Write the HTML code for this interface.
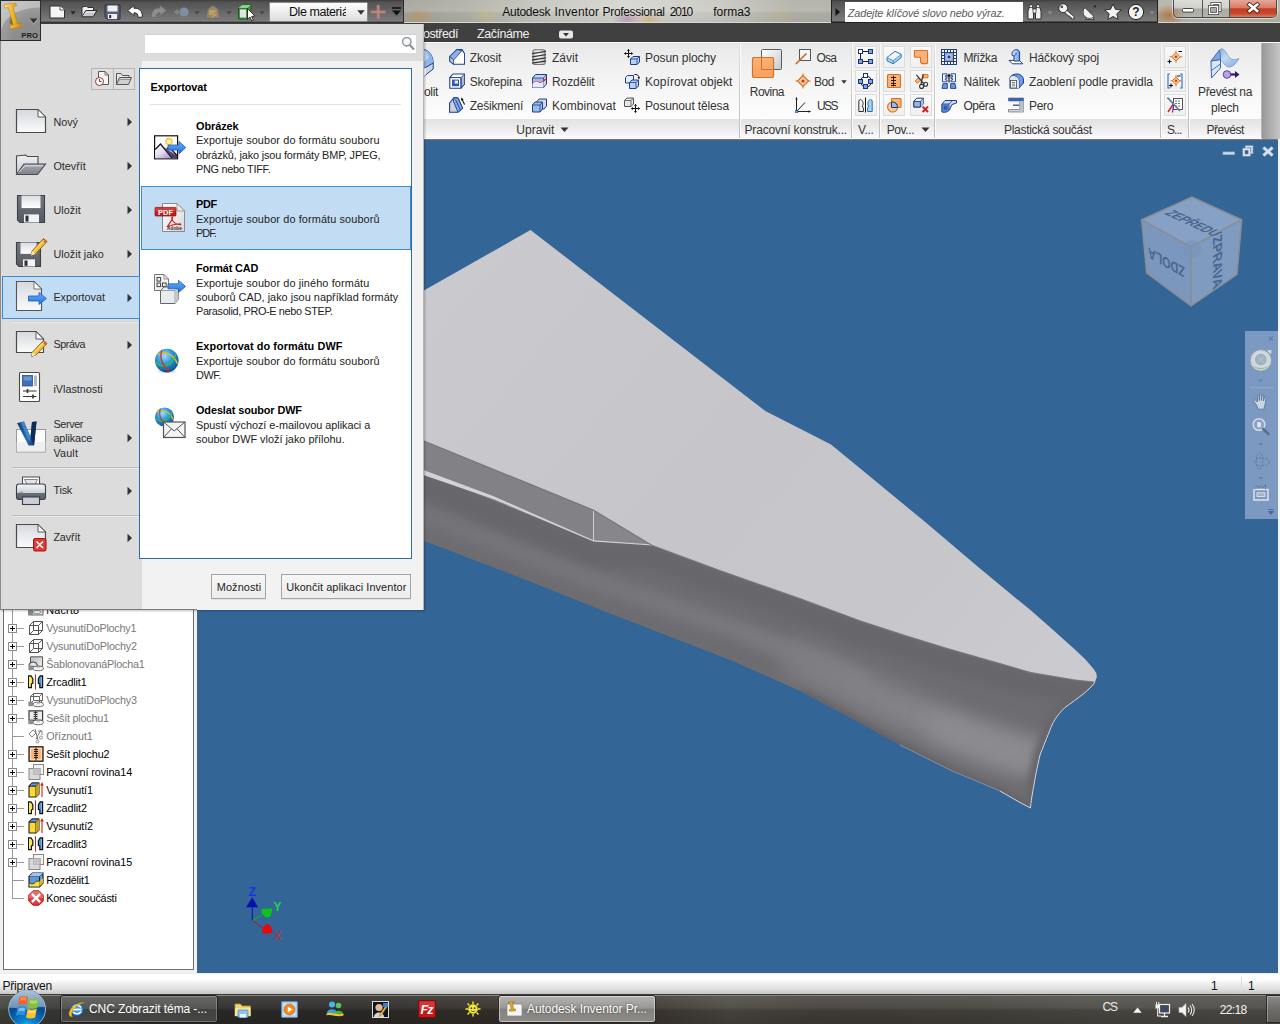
<!DOCTYPE html>
<html><head><meta charset="utf-8">
<style>
*{box-sizing:border-box;margin:0;padding:0}
html,body{width:1280px;height:1024px;overflow:hidden;background:#346597;font-family:"Liberation Sans",sans-serif;font-size:12px;color:#222}
.a{position:absolute}
.t{position:absolute;white-space:nowrap;line-height:1}
</style></head><body>
<div class="a" style="left:0px;top:0px;width:1280px;height:24px;background:linear-gradient(90deg,#8a867c 0,#a5a49b 32%,#adada4 36%,#c4c4bd 42%,#d6d6d0 49%,#c8c8c1 56%,#b0b0a7 62%,#a9a9a0 80%,#b0b0a6 90%,#babab0 94%,#b4b0a4 100%)"></div>
<div class="a" style="left:404px;top:0px;width:876px;height:24px;background:linear-gradient(rgba(255,255,255,.06),rgba(255,255,255,.12) 45%,rgba(0,0,0,.02) 55%,rgba(0,0,0,.05) 100%)"></div>
<div class="a" style="left:405px;top:8px;width:28px;height:16px;background:radial-gradient(closest-side,rgba(200,140,70,.55),rgba(200,140,70,0))"></div>
<div class="a" style="left:470px;top:6px;width:30px;height:18px;background:radial-gradient(closest-side,rgba(205,190,120,.45),rgba(205,190,120,0))"></div>
<div class="a" style="left:760px;top:6px;width:40px;height:18px;background:radial-gradient(closest-side,rgba(190,180,120,.4),rgba(190,180,120,0))"></div>
<div class="a" style="left:1152px;top:4px;width:34px;height:22px;background:radial-gradient(closest-side,rgba(176,104,50,.75),rgba(176,104,50,0))"></div>
<div class="a" style="left:612px;top:12px;width:30px;height:14px;background:radial-gradient(closest-side,rgba(170,110,170,.55),rgba(170,110,170,0))"></div>
<div class="a" style="left:634px;top:13px;width:30px;height:13px;background:radial-gradient(closest-side,rgba(220,160,90,.55),rgba(220,160,90,0))"></div>
<div class="a" style="left:404px;top:22.4px;width:876px;height:1px;background:#dad8d2"></div>
<div class="t" style="left:502.3px;top:6px;font-size:12.00px;color:#111;letter-spacing:-0.279px;">Autodesk</div>
<div class="t" style="left:554.6px;top:6px;font-size:12.00px;color:#111;letter-spacing:0.155px;">Inventor</div>
<div class="t" style="left:602.6px;top:6px;font-size:12.00px;color:#111;letter-spacing:-0.336px;">Professional</div>
<div class="t" style="left:669.8px;top:6px;font-size:12.00px;color:#111;letter-spacing:-1.124px;">2010</div>
<div class="t" style="left:713.2px;top:6px;font-size:12.00px;color:#111;letter-spacing:-0.008px;">forma3</div>
<div class="a" style="left:41px;top:0px;width:363px;height:24px;background:linear-gradient(#3c3c3c 0,#525252 8%,#646464 45%,#777777 80%,#797979 88%,#222 95%,#222 100%);border-right:1px solid #2a2a2a"></div>
<div class="a" style="left:831px;top:0px;width:327px;height:23px;background:linear-gradient(#3c3c3c 0,#525252 8%,#646464 45%,#777777 82%,#797979 90%,#222 97%,#222 100%);border-left:1px solid #222;border-right:1px solid #222"></div>
<div class="a" style="left:844.5px;top:2px;width:178.5px;height:19.5px;background:#fff"></div>
<div class="t" style="left:847.8px;top:8px;font-size:10.90px;color:#5c5c5c;letter-spacing:-0.126px;font-style:italic;">Zadejte klíčové slovo nebo výraz.</div>
<svg class="a" style="left:835px;top:7px" width="6" height="10" viewBox="0 0 6 10"><path d="M0.5,1 L5,5 L0.5,9Z" fill="#111"/></svg>
<div class="a" style="left:1173px;top:0px;width:104px;height:18px;border:1px solid #4a4a48;border-top:none;border-radius:0 0 5px 5px;background:linear-gradient(rgba(255,255,255,.5),rgba(255,255,255,.28) 48%,rgba(110,110,105,.28) 52%,rgba(190,190,185,.3));box-shadow:0 0 0 1px rgba(255,255,255,.5)"></div>
<div class="a" style="left:1230px;top:0px;width:46px;height:17px;border-radius:0 0 4px 0;background:linear-gradient(#e4a898 0,#d87c68 45%,#c23c22 52%,#c84a30 80%,#d87c5c 100%)"></div>
<div class="a" style="left:1202px;top:0px;width:1px;height:17px;background:#55524e"></div>
<div class="a" style="left:1229px;top:0px;width:1px;height:17px;background:#55524e"></div>
<svg class="a" style="left:1181px;top:6px" width="14" height="8" viewBox="0 0 14 8"><rect x="1.5" y="2.5" width="11" height="3.6" rx="1" fill="#fff" stroke="#444" stroke-width="1"/></svg>
<svg class="a" style="left:1208px;top:2px" width="14" height="13" viewBox="0 0 14 13"><rect x="4" y="1.5" width="8" height="7" fill="none" stroke="#444" stroke-width="3"/><rect x="4" y="1.5" width="8" height="7" fill="none" stroke="#fff" stroke-width="1.4"/><rect x="1.5" y="4.5" width="8" height="7" fill="#aaa" stroke="#444" stroke-width="3"/><rect x="1.5" y="4.5" width="8" height="7" fill="none" stroke="#fff" stroke-width="1.4"/></svg>
<svg class="a" style="left:1246px;top:2px" width="14" height="12" viewBox="0 0 14 12"><path d="M3.6,2.6 L11.2,9 M11.2,2.6 L3.6,9" stroke="#4a2a24" stroke-width="4.4" stroke-linecap="square"/><path d="M3.6,2.6 L11.2,9 M11.2,2.6 L3.6,9" stroke="#fff" stroke-width="2.6" stroke-linecap="square"/></svg>
<div class="a" style="left:0px;top:23.4px;width:1280px;height:18.2px;background:#404040"></div>
<div class="a" style="left:0px;top:41.6px;width:1280px;height:1.6px;background:#f8f8f8"></div>
<div class="t" style="left:423.0px;top:28px;font-size:12.50px;color:#f0f0f0;letter-spacing:-0.459px;">ostředí</div>
<div class="t" style="left:477.0px;top:28px;font-size:12.50px;color:#f0f0f0;letter-spacing:-0.447px;">Začínáme</div>
<svg class="a" style="left:558px;top:28.5px" width="16" height="11" viewBox="0 0 16 11"><rect x="1" y="1.5" width="14" height="8" rx="2" fill="#e8e8e8"/><path d="M5,4 L11,4 L8,7.5Z" fill="#333"/></svg>
<div class="a" style="left:0px;top:43px;width:1262px;height:77px;background:linear-gradient(#e8e8e8 0,#eeeeee 20%,#f6f6f6 60%,#fdfdfd 100%)"></div>
<div class="a" style="left:0px;top:119.4px;width:1262px;height:19.4px;background:linear-gradient(#e2e2e2,#e9e9e9 35%,#f4f4f4 75%,#fafafa 100%)"></div>
<div class="a" style="left:1262px;top:43px;width:18px;height:96.2px;background:linear-gradient(90deg,#989898,#c6c6c6)"></div>
<div class="a" style="left:0px;top:138.7px;width:1280px;height:2.1px;background:linear-gradient(#828a94,#4a6284 60%,#3a5f8c)"></div>
<div class="a" style="left:198px;top:141px;width:1080px;height:832px;background:#346597"></div>
<div class="a" style="left:1278px;top:139px;width:2px;height:835px;background:#f4f4f4"></div>
<svg class="a" style="left:0;top:0" width="1280" height="1024" viewBox="0 0 1280 1024">
<defs>
<linearGradient id="gdeck" gradientUnits="userSpaceOnUse" x1="480" y1="250" x2="1000" y2="700">
<stop offset="0" stop-color="#cacace"/><stop offset=".45" stop-color="#c5c5ca"/><stop offset=".8" stop-color="#c7c7cb"/><stop offset="1" stop-color="#cbcbcf"/>
</linearGradient>
<linearGradient id="ghl" gradientUnits="userSpaceOnUse" x1="423" y1="0" x2="1040" y2="0"><stop offset="0" stop-color="#747378"/><stop offset=".5" stop-color="#79787d"/><stop offset=".72" stop-color="#828186"/><stop offset="1" stop-color="#8b8a8f"/></linearGradient>
<clipPath id="chull"><path d="M380,455 L423,472 L593.5,541 L652.5,545 L720,570 L800,598 L860,620.2 L903.75,634.5 L947.5,648.1 L1000,663 L1031,672 L1075,679.4 L1092,681.3 L1095,682 C1090,690 1078,698 1065,707.5 C1056,716 1052,724 1050,730 C1045,742 1042,750 1040,755 C1037,768 1035,778 1034,785 C1032,795 1031,802 1030.5,808 L1030.5,808 L1020,802.5 L1000,791 L950,770 L900,745 L850,717.5 L800,691 L732,660.7 L607,612.3 L520,577.5 L423,540.5 L380,524 Z"/></clipPath>
<filter id="b6" filterUnits="userSpaceOnUse" x="300" y="350" width="900" height="550"><feGaussianBlur stdDeviation="6"/></filter>
<filter id="b10" filterUnits="userSpaceOnUse" x="300" y="350" width="900" height="550"><feGaussianBlur stdDeviation="10"/></filter>
<filter id="b3" filterUnits="userSpaceOnUse" x="300" y="350" width="900" height="550"><feGaussianBlur stdDeviation="3"/></filter>
</defs>
<g clip-path="url(#chull)">
<rect x="380" y="430" width="760" height="400" fill="#6d6c71"/>
<path d="M380,496 L423,513 L607,585 L732,628 L800,655 L860,684" fill="none" stroke="url(#ghl)" stroke-width="20" stroke-linecap="round" filter="url(#b6)"/>
<path d="M380,468 L423,485 L593.5,554 L652.5,558 L720,583 L800,611 L860,633.2 L903.75,647.5 L947.5,661.1 L1000,676 L1031,685 L1075,692.4 L1092,694.3" fill="none" stroke="#67666b" stroke-width="24" filter="url(#b6)"/>
<path d="M800,662 L850,685 L900,708 L960,734 L1010,752 L1042,760" fill="none" stroke="url(#ghl)" stroke-width="38" stroke-linecap="round" filter="url(#b10)"/>
<path d="M940,726 L985,744 L1022,756" fill="none" stroke="#8d8c91" stroke-width="24" stroke-linecap="round" filter="url(#b10)"/>
<path d="M800,691 L850,717.5 L900,745 L950,770 L1000,791 L1020,802.5 L1030.5,808" fill="none" stroke="#626166" stroke-width="6" filter="url(#b3)"/>
<path d="M1095,682 C1090,690 1078,698 1065,707.5 C1056,716 1052,724 1050,730 C1045,742 1042,750 1040,755 C1037,768 1035,778 1034,785 C1032,795 1031,802 1030.5,808" fill="none" stroke="#66666a" stroke-width="14" filter="url(#b3)"/>
</g>
<path d="M1095,682 C1090,690 1078,698 1065,707.5 C1056,716 1052,724 1050,730 C1045,742 1042,750 1040,755 C1037,768 1035,778 1034,785 C1032,795 1031,802 1030.5,808 L1020,802.5 L1000,791" fill="none" stroke="#d4d6da" stroke-width="1" stroke-linejoin="round"/><path d="M1000,791 L950,770 L900,745" fill="none" stroke="#a9b0bc" stroke-width=".8" opacity=".7"/>
<path d="M380,423 L423,440 L593.5,509.4 L593.5,541 L423,472 L380,455 Z" fill="#828186"/>
<path d="M593.5,509.4 L652.5,545 L593.5,541 Z" fill="#87868b"/>
<path d="M380,453 L423.4,470 L493.8,496.3 L593.5,540.2 L652.5,544.6 L652.5,545.4 L593.5,541.4 L493.8,499.2 L423.4,475 L380,459Z" fill="#d3d3d6"/>
<path d="M593.5,509.4 L593.5,541" fill="none" stroke="#cfcfd1" stroke-width="1"/>
<path d="M1092,681.3 L1075,679.4 L1031,672 L1000,663 L947.5,648.1 L903.75,634.5 L860,620.2 L800,598 L720,570 L652.5,545 L593.5,509.4 L423,440 L380,423" fill="none" stroke="#77767b" stroke-width="2.4"/>
<path d="M380,315.5 L423,291 L530.5,230 L765.3,411.1 L831,444.4 L872.7,478.8 L925.5,522.3 L978.2,567.1 L1031,610.6 L1050.3,627.4 L1073.8,648.5 L1085.5,659.6 L1093.6,669 Q1097.2,673 1096.7,677.4 L1095,682 L1092,681.3 L1075,679.4 L1031,672 L1000,663 L947.5,648.1 L903.75,634.5 L860,620.2 L800,598 L720,570 L652.5,545 L593.5,509.4 L423,440 L380,423 Z" fill="url(#gdeck)"/>
</svg>
<svg class="a" style="left:0;top:0" width="1280" height="1024" viewBox="0 0 1280 1024"><polygon points="1191.8,197.0 1241.7,219.7 1191.0,247.0 1141.6,219.7" fill="#87a1c5"/><polygon points="1141.6,219.7 1191.0,247.0 1191.0,305.8 1146.7,273.0" fill="#7c97bd"/><polygon points="1191.0,247.0 1241.7,219.7 1237.0,274.4 1191.0,305.8" fill="#809bc0"/><path d="M1191.8,197.0 L1241.7,219.7 L1237.0,274.4 L1191.0,305.8 L1146.7,273.0 L1141.6,219.7 Z M1141.6,219.7 L1191.0,247.0 M1241.7,219.7 L1191.0,247.0 M1191.0,305.8 L1191.0,247.0" fill="none" stroke="#8a8d93" stroke-width="1.5"/><circle cx="1192" cy="249" r="9" fill="#7792b8" opacity=".6"/><g transform="matrix(0.9102,0.4141,-1.2301,0.5562,1193.60,223.00)"><text x="0" y="4" text-anchor="middle" font-family="Liberation Sans,sans-serif" font-weight="bold" font-size="11" fill="#4b668f" textLength="55" lengthAdjust="spacingAndGlyphs">ZEPŘEDU</text></g><g transform="matrix(0.0000,1.0000,-1.1886,0.6400,1217.40,261.70)"><text x="0" y="4" text-anchor="middle" font-family="Liberation Sans,sans-serif" font-weight="bold" font-size="11" fill="#4b668f" textLength="52" lengthAdjust="spacingAndGlyphs">ZPRAVA</text></g><g transform="matrix(-0.8752,-0.4837,0.0000,-1.3500,1166.30,262.75)"><text x="0" y="4" text-anchor="middle" font-family="Liberation Sans,sans-serif" font-weight="bold" font-size="11" fill="#4b668f" textLength="42" lengthAdjust="spacingAndGlyphs">ZDOLA</text></g></svg>
<svg class="a" style="left:1220px;top:143px" width="58" height="16" viewBox="0 0 58 16"><rect x="3" y="9" width="11.5" height="2.6" fill="#d4deea" stroke="#9ab0cc" stroke-width=".8"/><rect x="26.4" y="3.6" width="5.6" height="6" fill="none" stroke="#8fa6c4" stroke-width="2.6"/><rect x="26.4" y="3.6" width="5.6" height="6" fill="none" stroke="#d8e1ec" stroke-width="1.3"/><rect x="23.8" y="6.2" width="5.6" height="6" fill="#3f5f8c" stroke="#8fa6c4" stroke-width="2.6"/><rect x="23.8" y="6.2" width="5.6" height="6" fill="none" stroke="#e4ebf3" stroke-width="1.4"/><path d="M43.5,4.5 L52.5,12.5 M52.5,4.5 L43.5,12.5" stroke="#9ab0cc" stroke-width="3.6"/><path d="M43.5,4.5 L52.5,12.5 M52.5,4.5 L43.5,12.5" stroke="#dbe4ee" stroke-width="2.2"/></svg>
<div class="a" style="left:1245px;top:331px;width:33px;height:188px;background:#7c99c1"></div>
<svg class="a" style="left:1245px;top:331px" width="33" height="188" viewBox="0 0 33 188"><path d="M24,5.5 L28,9.5 M28,5.5 L24,9.5" stroke="#6280aa" stroke-width="1.2"/><circle cx="15.8" cy="29.4" r="10.8" fill="#cdd6dc" stroke="#8a98a6" stroke-width="1"/><path d="M8,35 A10.8,10.8 0 0 0 23.6,35 A12,8 0 0 1 8,35Z" fill="#8fc49c"/><circle cx="15.8" cy="28.5" r="6.6" fill="#9fb0bf" stroke="#d5dde4" stroke-width="1.3"/><path d="M13,25.7 L18.6,31.3 M18.6,25.7 L13,31.3" stroke="#c4ced8" stroke-width=".8"/><path d="M22,19.5 L26.5,19 L26,23.5Z" fill="#d5dde4"/><path d="M13.3,48.5 L18.3,48.5 L15.8,51.5Z" fill="#6884ad"/><path d="M5,56.7 L29,56.7" stroke="#90a9cc" stroke-width="1"/><path d="M11.5,74 C9,71 8.5,69.5 9.5,69 C10.5,68.6 11.5,69.8 12.5,71 L12.3,65.5 C12.3,64 14,64 14.1,65.5 L14.3,69.5 L14.5,64 C14.6,62.6 16.3,62.6 16.3,64 L16.3,69.5 L17,64.8 C17.2,63.5 18.8,63.7 18.7,65.1 L18.4,70 L19.6,66.6 C20,65.4 21.4,65.9 21.1,67.2 C20.5,70 20.6,72.5 19.6,75 L19,78.2 L13.2,78.2 Z" fill="#c9d5e5" stroke="#5f7898" stroke-width=".9"/><circle cx="14" cy="93.5" r="5.8" fill="#8aa3c6" stroke="#d0dae8" stroke-width="1.5"/><path d="M18.3,98 L23.5,103.2" stroke="#5c6f8a" stroke-width="2.6" stroke-linecap="round"/><path d="M11.8,90.5 L15,90.5 L16.5,92 L16.5,96.8 L11.8,96.8Z" fill="#dfe6ee" stroke="#6f87a8" stroke-width=".6"/><path d="M13.3,112 L18.3,112 L15.8,115Z" fill="#6884ad"/><ellipse cx="17" cy="131" rx="7.5" ry="4" fill="none" stroke="#5f7ca6" stroke-width="1" stroke-dasharray="2.2 1.3"/><ellipse cx="14.5" cy="130" rx="3.2" ry="8.5" fill="none" stroke="#5f7ca6" stroke-width="1" stroke-dasharray="2.2 1.3"/><path d="M13.3,146 L18.3,146 L15.8,149Z" fill="#6884ad"/><rect x="9" y="158.5" width="14" height="10.5" fill="none" stroke="#e4e9f0" stroke-width="1.4"/><rect x="12" y="161.8" width="8" height="3.6" fill="#a8b4c4" stroke="#e4e9f0" stroke-width=".8"/><path d="M9,158.5 L12.5,154.5 L14,157 L16,154.5 L18,157 L20.5,153.5 L20.5,158.5" fill="none" stroke="#5f7ca6" stroke-width=".9"/><path d="M23.5,178.5 L28.5,178.5 M23.5,180.5 L28.5,180.5 L26,183.5Z" stroke="#4f6a92" stroke-width="1" fill="#4f6a92"/></svg>
<svg class="a" style="left:230px;top:870px" width="70" height="80" viewBox="0 0 70 80"><path d="M22.3,50.8 L22.3,37" stroke="#0b12b8" stroke-width="1.1"/><path d="M16,37.3 L28,37.3 L22.3,27.3Z" fill="#0a0fb4"/><path d="M22.3,50.8 L34,43.6" stroke="#10b81a" stroke-width="1"/><path d="M31.6,39 L42.6,38.3 L40.4,46.8 L35.5,47.6 L31.6,42.5Z" fill="#0cc41c"/><path d="M22.3,50.8 L33,58" stroke="#b01820" stroke-width="1"/><path d="M32,62.5 C32,58 35,54 37.5,54 C40,54 42,58 42,62.5 C40,63.8 34,63.8 32,62.5Z" fill="#e80808"/><text x="18.5" y="26" font-family="Liberation Sans,sans-serif" font-weight="bold" font-size="12.5" fill="#1a36e0">Z</text><text x="43.5" y="41" font-family="Liberation Sans,sans-serif" font-weight="bold" font-size="12" fill="#22d446">Y</text><text x="43.5" y="70" font-family="Liberation Sans,sans-serif" font-size="12.5" fill="#c22c3a">X</text></svg>
<div class="a" style="left:0px;top:140px;width:198px;height:836px;background:#f1f1f1"></div>
<div class="a" style="left:197px;top:140px;width:1.4px;height:834px;background:#4a6284"></div>
<div class="a" style="left:3px;top:140px;width:191px;height:830px;background:#fff;border:1px solid #6e6e6e;border-top:none"></div>
<div class="a" style="left:0px;top:973px;width:1280px;height:21px;background:linear-gradient(#e4e6ea 0,#ffffff 8%,#ffffff 30%,#f0f0f0 50%,#dcdcdc 80%,#c6c6c6 100%)"></div>
<div class="t" style="left:2.4px;top:980px;font-size:12.00px;color:#111;letter-spacing:-0.206px;">Připraven</div>
<div class="t" style="left:1211.0px;top:980px;font-size:12.00px;color:#111;">1</div>
<div class="t" style="left:1248.0px;top:980px;font-size:12.00px;color:#111;">1</div>
<div class="a" style="left:1241px;top:977px;width:1px;height:16px;background:#dedede"></div>
<svg class="a" style="left:423px;top:48px" width="12" height="30" viewBox="0 0 12 30"><path d="M0,1.2 C6,2 10.2,8 10.2,15 L10.2,21 L0,29Z" fill="#d0d6e0" stroke="#1a3e96" stroke-width="1"/><path d="M0,1.2 C6,2 10.2,8 10.2,15 L0,21Z" fill="#8fb4ea"/><path d="M0,2.5 C3,3 5,6 6,10 L0,14Z" fill="#c4d8f6" opacity=".8"/><path d="M0,21 L10.2,15" stroke="#1a3e96" stroke-width="1"/><path d="M0,21 L0,29 L3,26.6 L3,19.4Z" fill="#fff"/></svg>
<div class="t" style="left:424.0px;top:86px;font-size:12.00px;color:#333;letter-spacing:-0.335px;">olit</div>
<svg class="a" style="left:449px;top:49px" width="16" height="16" viewBox="0 0 16 16"><path d="M0.7,7.6 L8,0.5 L13,0.6 L15.6,4.7 L15.6,15.3 L4.6,15.3 L0.7,12Z" fill="#fff" stroke="#1a3e96" stroke-width="1.1" stroke-linejoin="round"/><path d="M0.7,7.6 L8,0.5 L12.9,1.8 L4.6,11Z" fill="#8eaee4" stroke="#1a3e96" stroke-width=".8"/><path d="M0.7,7.6 L4.6,11 L4.6,15.3 L0.7,12Z" fill="#c2c7d0" stroke="#1a3e96" stroke-width=".8"/></svg>
<div class="t" style="left:469.7px;top:52px;font-size:12.00px;color:#333;letter-spacing:-0.051px;">Zkosit</div>
<svg class="a" style="left:449px;top:73px" width="16" height="16" viewBox="0 0 16 16"><path d="M0.8,4.6 L4,1 L15.6,1 L15.6,11 L12,15.2 L0.8,15.2Z" fill="#fff" stroke="#1a3e96" stroke-width="1.1" stroke-linejoin="round"/><path d="M12,4.6 L15.6,1 L15.6,11 L12,15.2Z" fill="#b4bac4" stroke="#1a3e96" stroke-width=".8"/><path d="M0.8,4.6 L12,4.6 L12,15.2" fill="none" stroke="#1a3e96" stroke-width="1"/><rect x="3" y="6.6" width="7" height="6.6" fill="#2f57ac"/><rect x="5.6" y="7.6" width="3.4" height="3" fill="#e6ecf8"/></svg>
<div class="t" style="left:469.7px;top:76px;font-size:12.00px;color:#333;letter-spacing:-0.193px;">Skořepina</div>
<svg class="a" style="left:449px;top:97px" width="16" height="16" viewBox="0 0 16 16"><path d="M0.6,15.2 L0.6,6 L5,0.6 L9,1 L13.6,11.4 L9,15.2Z" fill="#cdd1d8" stroke="#1a3e96" stroke-width="1.1" stroke-linejoin="round"/><path d="M5,0.6 L9,1 L13.6,11.4 L9,15.2 L4.4,4.4Z" fill="#86a8e2" stroke="#1a3e96" stroke-width=".9"/><path d="M6.6,2.4 L11.4,13.2" stroke="#1a3e96" stroke-width=".8"/><path d="M15.6,7.6 L12.8,1.8" stroke="#111" stroke-width="1.1"/><path d="M12.2,0.6 L12,3.6 L14.6,2.4Z" fill="#111"/></svg>
<div class="t" style="left:469.7px;top:100px;font-size:12.00px;color:#333;letter-spacing:-0.228px;">Zešikmení</div>
<svg class="a" style="left:531px;top:49px" width="16" height="16" viewBox="0 0 16 16"><defs><linearGradient id="gth" x1="0" y1="0" x2="1" y2="0"><stop offset="0" stop-color="#d0d0d0"/><stop offset=".5" stop-color="#fafafa"/><stop offset="1" stop-color="#c4c4c4"/></linearGradient></defs><rect x="2" y="0.8" width="12" height="14.6" rx="1" fill="url(#gth)" stroke="#5a5a5a" stroke-width=".9"/><path d="M1,4.6 L15,2.4 M1,7.8 L15,5.6 M1,11 L15,8.8 M1,14.2 L15,12" stroke="#3a3a3a" stroke-width="1.3"/></svg>
<div class="t" style="left:552.0px;top:52px;font-size:12.00px;color:#333;letter-spacing:-0.001px;">Závit</div>
<svg class="a" style="left:531px;top:73px" width="16" height="16" viewBox="0 0 16 16"><path d="M1.5,5 L4.5,1.5 L15.5,1.5 L15.5,11 L12.5,14.5 L1.5,14.5Z" fill="#cfd5de" stroke="#1a3e96" stroke-width="1"/><path d="M1.5,5 L12.5,5 L12.5,14.5 L1.5,14.5Z" fill="#9dbbe6" stroke="#1a3e96" stroke-width=".8"/><path d="M12.5,5 L15.5,1.5" stroke="#1a3e96" stroke-width=".8"/><path d="M1.5,11 C4,8 6,8 8,9.5 C10,11 11,9 12.5,8 L15.5,5.5" fill="none" stroke="#d81e1e" stroke-width="1.2"/><path d="M1.5,11 C4,8 6,8 8,9.5 C10,11 11,9 12.5,8 L12.5,14.5 L1.5,14.5Z" fill="#e7ebf2"/></svg>
<div class="t" style="left:552.0px;top:76px;font-size:12.00px;color:#333;letter-spacing:-0.094px;">Rozdělit</div>
<svg class="a" style="left:531px;top:97px" width="16" height="16" viewBox="0 0 16 16"><path d="M5.5,5 L8,2 L15.5,2 L15.5,9 L13,12 L5.5,12Z" fill="#d5dbe5" stroke="#1a3e96" stroke-width="1"/><path d="M1.5,8 L4,5 L11.5,5 L11.5,12 L9,15 L1.5,15Z" fill="#9dbbe6" stroke="#1a3e96" stroke-width="1"/><path d="M1.5,8 L9,8 L9,15 M9,8 L11.5,5" fill="none" stroke="#1a3e96" stroke-width=".8"/></svg>
<div class="t" style="left:552.0px;top:100px;font-size:12.00px;color:#333;letter-spacing:0.063px;">Kombinovat</div>
<svg class="a" style="left:624px;top:49px" width="16" height="16" viewBox="0 0 16 16"><path d="M6.5,10 L9,7.5 L15.5,7.5 L15.5,13 L13,15.5 L6.5,15.5Z" fill="#b9d0ee" stroke="#1a3e96" stroke-width="1"/><path d="M6.5,10 L13,10 L13,15.5 M13,10 L15.5,7.5" fill="none" stroke="#1a3e96" stroke-width=".8"/><path d="M4.5,0.5 L4.5,8.5 M0.5,4.5 L8.5,4.5" stroke="#111" stroke-width="1"/><path d="M4.5,0 L3,2 L6,2Z M4.5,9 L3,7 L6,7Z M0,4.5 L2,3 L2,6Z M9,4.5 L7,3 L7,6Z" fill="#111"/></svg>
<div class="t" style="left:645.0px;top:52px;font-size:12.00px;color:#333;letter-spacing:-0.087px;">Posun plochy</div>
<svg class="a" style="left:624px;top:73px" width="16" height="16" viewBox="0 0 16 16"><path d="M1.5,4.5 L3.5,2.5 L9.5,2.5 L9.5,8 L7.5,10 L1.5,10Z" fill="#e9edf3" stroke="#1a3e96" stroke-width="1"/><path d="M5.5,9.5 L8,7 L14.5,7 L14.5,13 L12,15.5 L5.5,15.5Z" fill="#b9d0ee" stroke="#1a3e96" stroke-width="1"/><path d="M5.5,9.5 L12,9.5 L12,15.5 M12,9.5 L14.5,7" fill="none" stroke="#1a3e96" stroke-width=".8"/><path d="M10.5,1.5 C13,1 15,2.5 15,5" fill="none" stroke="#111" stroke-width="1"/><path d="M15,6.5 L13.5,4.3 L16,4.3Z" fill="#111"/></svg>
<div class="t" style="left:645.0px;top:76px;font-size:12.00px;color:#333;letter-spacing:0.049px;">Kopírovat objekt</div>
<svg class="a" style="left:624px;top:97px" width="16" height="16" viewBox="0 0 16 16"><path d="M0.5,3.5 L3,1 L9.5,1 L9.5,7 L7,9.5 L0.5,9.5Z" fill="#e3e6ea" stroke="#555" stroke-width="1"/><path d="M0.5,3.5 L7,3.5 L7,9.5 M7,3.5 L9.5,1" fill="none" stroke="#555" stroke-width=".8"/><path d="M11.5,7.5 L11.5,15.5 M7.5,11.5 L15.5,11.5" stroke="#111" stroke-width="1"/><path d="M11.5,7 L10,9 L13,9Z M11.5,16 L10,14 L13,14Z M7,11.5 L9,10 L9,13Z M16,11.5 L14,10 L14,13Z" fill="#111"/></svg>
<div class="t" style="left:645.0px;top:100px;font-size:12.00px;color:#333;letter-spacing:-0.138px;">Posunout tělesa</div>
<div class="t" style="left:516.3px;top:124px;font-size:12.00px;color:#333;letter-spacing:-0.001px;">Upravit</div>
<svg class="a" style="left:560px;top:127px" width="9" height="6" viewBox="0 0 9 6"><path d="M0.5,0.5 L8.5,0.5 L4.5,5Z" fill="#333"/></svg>
<div class="a" style="left:738.5px;top:44px;width:1px;height:94px;background:linear-gradient(#e2e2e2,#c9c9c9 50%,#bdbdbd)"></div>
<div class="a" style="left:739.5px;top:44px;width:1px;height:94px;background:rgba(255,255,255,.8)"></div>
<div class="a" style="left:851px;top:44px;width:1px;height:94px;background:linear-gradient(#e2e2e2,#c9c9c9 50%,#bdbdbd)"></div>
<div class="a" style="left:852px;top:44px;width:1px;height:94px;background:rgba(255,255,255,.8)"></div>
<div class="a" style="left:879px;top:44px;width:1px;height:94px;background:linear-gradient(#e2e2e2,#c9c9c9 50%,#bdbdbd)"></div>
<div class="a" style="left:880px;top:44px;width:1px;height:94px;background:rgba(255,255,255,.8)"></div>
<div class="a" style="left:933.5px;top:44px;width:1px;height:94px;background:linear-gradient(#e2e2e2,#c9c9c9 50%,#bdbdbd)"></div>
<div class="a" style="left:934.5px;top:44px;width:1px;height:94px;background:rgba(255,255,255,.8)"></div>
<div class="a" style="left:1160px;top:44px;width:1px;height:94px;background:linear-gradient(#e2e2e2,#c9c9c9 50%,#bdbdbd)"></div>
<div class="a" style="left:1161px;top:44px;width:1px;height:94px;background:rgba(255,255,255,.8)"></div>
<div class="a" style="left:1188px;top:44px;width:1px;height:94px;background:linear-gradient(#e2e2e2,#c9c9c9 50%,#bdbdbd)"></div>
<div class="a" style="left:1189px;top:44px;width:1px;height:94px;background:rgba(255,255,255,.8)"></div>
<div class="a" style="left:1261px;top:43px;width:1px;height:95px;background:#b5b5b5"></div>
<svg class="a" style="left:750px;top:47px" width="34" height="33" viewBox="0 0 34 33"><defs><linearGradient id="gw" x1="0" y1="0" x2="1" y2="1"><stop offset="0" stop-color="#ffffff"/><stop offset="1" stop-color="#c5c9cf"/></linearGradient><linearGradient id="go" x1="0" y1="0" x2="0" y2="1"><stop offset="0" stop-color="#fbb278"/><stop offset="1" stop-color="#f7a060"/></linearGradient></defs><rect x="11.5" y="2.5" width="20" height="20" rx="1" fill="url(#gw)" stroke="#5c5c5c" stroke-width="1"/><rect x="2.5" y="10.5" width="21" height="20" rx="1.2" fill="url(#go)" stroke="#d9701e" stroke-width="1.2"/><path d="M11.5,10.5 L11.5,22.5 L23.5,22.5" fill="none" stroke="#d9701e" stroke-width="1"/></svg>
<div class="t" style="left:749.8px;top:86px;font-size:12.00px;color:#333;letter-spacing:-0.526px;">Rovina</div>
<svg class="a" style="left:795px;top:49px" width="16" height="16" viewBox="0 0 16 16"><rect x="4.5" y="0.5" width="11" height="11" fill="#f4f5f7" stroke="#555" stroke-width="1"/><path d="M0.8,15 L11.5,4.5" stroke="#c9641c" stroke-width="1.6"/></svg>
<div class="t" style="left:816.5px;top:52px;font-size:12.00px;color:#333;letter-spacing:-0.836px;">Osa</div>
<svg class="a" style="left:794.5px;top:72.6px" width="16" height="16" viewBox="0 0 16 16"><path d="M8,0.5 L8,15.5 M0.5,8 L15.5,8" stroke="#d9701e" stroke-width="1"/><path d="M8,2.5 L13.5,8 L8,13.5 L2.5,8Z" fill="#fbc9a0" stroke="#d9701e" stroke-width="1.1"/><circle cx="8" cy="8" r="1.6" fill="#b8480c"/></svg>
<div class="t" style="left:814.0px;top:76px;font-size:12.00px;color:#333;letter-spacing:-0.451px;">Bod</div>
<svg class="a" style="left:840.5px;top:79.5px" width="6" height="4" viewBox="0 0 6 4"><path d="M0.3,0.3 L5.7,0.3 L3,3.7Z" fill="#333"/></svg>
<svg class="a" style="left:794.5px;top:97px" width="16" height="16" viewBox="0 0 16 16"><path d="M1.5,0.5 L1.5,14.5 L15.5,14.5" fill="none" stroke="#222" stroke-width="1"/><path d="M1.5,14.5 L10,5.5" stroke="#222" stroke-width="1"/><path d="M1.5,0 L0.3,2.5 L2.7,2.5Z M16,14.5 L13.5,13.3 L13.5,15.7Z" fill="#222"/><rect x="0.5" y="13.5" width="2.4" height="2.4" fill="#5b9ae8" stroke="#1f4a9e" stroke-width=".5"/></svg>
<div class="t" style="left:817.0px;top:100px;font-size:12.00px;color:#333;letter-spacing:-1.558px;">USS</div>
<div class="t" style="left:744.5px;top:124px;font-size:12.00px;color:#333;letter-spacing:-0.177px;">Pracovní konstruk...</div>
<div class="a" style="left:855px;top:46px;width:22px;height:22px;background:linear-gradient(#fafafa,#efefef);border:1px solid #dcdcdc"></div>
<svg class="a" style="left:858px;top:49px" width="16" height="16" viewBox="0 0 16 16"><path d="M5,2.5 H11 M2.5,5 V11 M5,12.5 H11" fill="none" stroke="#1a1a1a" stroke-width="1"/><rect x="0.5" y="0.5" width="4" height="4" fill="#fff" stroke="#16367e" stroke-width="1"/><rect x="10.5" y="0.5" width="4" height="4" fill="#7ea2e6" stroke="#16367e" stroke-width="1"/><rect x="0.5" y="10.5" width="4" height="4" fill="#7ea2e6" stroke="#16367e" stroke-width="1"/><rect x="10.5" y="10.5" width="4" height="4" fill="#7ea2e6" stroke="#16367e" stroke-width="1"/></svg>
<div class="a" style="left:855px;top:70px;width:22px;height:22px;background:linear-gradient(#fafafa,#efefef);border:1px solid #dcdcdc"></div>
<svg class="a" style="left:858px;top:73px" width="16" height="16" viewBox="0 0 16 16"><circle cx="8" cy="8.5" r="5.5" fill="none" stroke="#1a1a1a" stroke-width="1"/><rect x="5.5" y="0.5" width="4" height="4" fill="#fff" stroke="#16367e" stroke-width="1"/><rect x="0.5" y="6.5" width="4" height="4" fill="#7ea2e6" stroke="#16367e" stroke-width="1"/><rect x="10.5" y="6.5" width="4" height="4" fill="#7ea2e6" stroke="#16367e" stroke-width="1"/><rect x="5.5" y="11.5" width="4" height="4" fill="#7ea2e6" stroke="#16367e" stroke-width="1"/></svg>
<div class="a" style="left:855px;top:94px;width:22px;height:22px;background:linear-gradient(#fafafa,#efefef);border:1px solid #dcdcdc"></div>
<svg class="a" style="left:858px;top:97px" width="16" height="16" viewBox="0 0 16 16"><path d="M7.5,0.5 V15.5" stroke="#111" stroke-width="1"/><path d="M0.8,14.5 V3.6 L2.6,2.4 C5.2,3.6 5.8,7 4.4,9 L4.4,10 L5.4,10.6 V14.5Z" fill="#eef0f4" stroke="#333" stroke-width="1"/><path d="M14.2,14.5 V3.6 L12.4,2.4 C9.8,3.6 9.2,7 10.6,9 L10.6,10 L9.6,10.6 V14.5Z" fill="#a9d2f2" stroke="#2a6cb4" stroke-width="1"/></svg>
<div class="a" style="left:883px;top:46px;width:22px;height:22px;background:linear-gradient(#fafafa,#efefef);border:1px solid #dcdcdc"></div>
<svg class="a" style="left:886px;top:49px" width="16" height="16" viewBox="0 0 16 16"><path d="M1,8.6 L9,2.4 L15.2,5.4 L15.2,8.6 L7.2,14.8 L1,11.8Z" fill="#a4d4f4" stroke="#2a78bc" stroke-width="1" stroke-linejoin="round"/><path d="M1,8.6 L9,2.4 L15.2,5.4 L7.2,11.6Z" fill="#f4f4f4" stroke="#2a78bc" stroke-width=".7"/><path d="M7.2,11.6 V14.8" stroke="#2a78bc" stroke-width=".7"/></svg>
<div class="a" style="left:910px;top:46px;width:22px;height:22px;background:linear-gradient(#fafafa,#efefef);border:1px solid #dcdcdc"></div>
<svg class="a" style="left:913px;top:49px" width="16" height="16" viewBox="0 0 16 16"><path d="M2.2,1.5 H13.8 Q14.6,1.5 14.6,2.3 V13.8 Q14.6,14.6 13.8,14.6 H9 L7.6,13.2 V9 Q7.6,8.2 6.8,8.2 H2.2 Q1.4,8.2 1.4,7.4 V2.3 Q1.4,1.5 2.2,1.5Z" fill="#fbb27a" stroke="#d9701e" stroke-width="1.1"/></svg>
<div class="a" style="left:883px;top:70px;width:22px;height:22px;background:linear-gradient(#fafafa,#efefef);border:1px solid #dcdcdc"></div>
<svg class="a" style="left:886px;top:73px" width="16" height="16" viewBox="0 0 16 16"><rect x="1.5" y="1.5" width="13" height="13" rx="1" fill="#fbb27a" stroke="#d9701e" stroke-width="1.1"/><path d="M7.5,1.5 V14.5" stroke="#d9701e" stroke-width="1"/><path d="M7.5,3 V13 M5,4.5 H10 M5,7.5 H10 M5,10.5 H10 M5,12.5 H10" stroke="#2a1a10" stroke-width="1"/></svg>
<div class="a" style="left:910px;top:70px;width:22px;height:22px;background:linear-gradient(#fafafa,#efefef);border:1px solid #dcdcdc"></div>
<svg class="a" style="left:913px;top:73px" width="16" height="16" viewBox="0 0 16 16"><path d="M10,1.2 V6 M10,1.6 H15 V4.8 H10" fill="#fbb27a" stroke="#d9701e" stroke-width=".9"/><path d="M2,8 L5.2,4.8 L7.6,7.2 L4.4,10.4Z" fill="#fbb27a" stroke="#d9701e" stroke-width=".9"/><path d="M3.4,1.8 L11.4,11.4 M10.2,1.2 L8,11" stroke="#3a3a3a" stroke-width="1.3"/><circle cx="12.6" cy="11.2" r="2" fill="none" stroke="#333" stroke-width="1.1"/><circle cx="8.6" cy="13.4" r="2" fill="none" stroke="#333" stroke-width="1.1"/></svg>
<div class="a" style="left:883px;top:94px;width:22px;height:22px;background:linear-gradient(#fafafa,#efefef);border:1px solid #dcdcdc"></div>
<svg class="a" style="left:886px;top:97px" width="16" height="16" viewBox="0 0 16 16"><rect x="5.5" y="1.5" width="9.5" height="9" rx=".8" fill="#fbb27a" stroke="#d9701e" stroke-width="1.1"/><circle cx="6.6" cy="10" r="5" fill="#fbc9a0" stroke="#d9701e" stroke-width="1.1"/><path d="M5.5,5.1 A5,5 0 0 1 11.5,10.5 L5.5,10.5Z" fill="#9dbbe6" stroke="#16367e" stroke-width="1"/></svg>
<div class="a" style="left:910px;top:94px;width:22px;height:22px;background:linear-gradient(#fafafa,#efefef);border:1px solid #dcdcdc"></div>
<svg class="a" style="left:913px;top:97px" width="16" height="16" viewBox="0 0 16 16"><path d="M0.8,4.4 L3.8,1.2 L10.4,1.2 L10.4,6.8 L7.4,10 L0.8,10Z" fill="#fff" stroke="#16367e" stroke-width="1" stroke-linejoin="round"/><path d="M7.4,4.4 L10.4,1.2 L10.4,6.8 L7.4,10Z" fill="#b8bec8"/><path d="M0.8,4.4 H7.4 V10 H0.8Z" fill="#9db4dc" stroke="#16367e" stroke-width=".9"/><path d="M7.4,4.4 L10.4,1.2" stroke="#16367e" stroke-width=".8"/><path d="M9.6,9.6 L15,15 M15,9.6 L9.6,15" stroke="#d41a1a" stroke-width="2"/></svg>
<div class="t" style="left:858.0px;top:124px;font-size:12.00px;color:#333;letter-spacing:-0.326px;">V...</div>
<div class="t" style="left:886.7px;top:124px;font-size:12.00px;color:#333;letter-spacing:-0.382px;">Pov...</div>
<svg class="a" style="left:920.5px;top:127px" width="9" height="6" viewBox="0 0 9 6"><path d="M0.5,0.5 L8.5,0.5 L4.5,5Z" fill="#333"/></svg>
<svg class="a" style="left:941px;top:49px" width="16" height="16" viewBox="0 0 16 16"><rect x="0" y="0" width="16" height="16" fill="#24407c"/><g fill="#f6f8fb"><rect x="1" y="1" width="2" height="2"/><rect x="1" y="4" width="2" height="2"/><rect x="1" y="7" width="2" height="2"/><rect x="1" y="10" width="2" height="2"/><rect x="1" y="13" width="2" height="2"/><rect x="4" y="1" width="2" height="2"/><rect x="4" y="13" width="2" height="2"/><rect x="7" y="1" width="2" height="2"/><rect x="7" y="13" width="2" height="2"/><rect x="10" y="1" width="2" height="2"/><rect x="10" y="13" width="2" height="2"/><rect x="13" y="1" width="2" height="2"/><rect x="13" y="4" width="2" height="2"/><rect x="13" y="7" width="2" height="2"/><rect x="13" y="10" width="2" height="2"/><rect x="13" y="13" width="2" height="2"/></g><rect x="4" y="4" width="8" height="8" fill="#8ea6d4"/><rect x="5.5" y="5.5" width="5" height="5" fill="#c8d6ee"/><rect x="6.6" y="6.6" width="2.8" height="2.8" fill="#24407c"/></svg>
<div class="t" style="left:963.4px;top:52px;font-size:12.00px;color:#333;letter-spacing:-0.400px;">Mřížka</div>
<svg class="a" style="left:941px;top:73px" width="16" height="16" viewBox="0 0 16 16"><path d="M1.5,0.8 H6 V2.6 H4.4 V4 H6 V5.6 H4.4 V7 H6 V8.8 H1.5Z M14.5,0.8 H10 V2.6 H11.6 V4 H10 V5.6 H11.6 V7 H10 V8.8 H14.5Z" fill="#f2f5fa" stroke="#1a3e96" stroke-width=".9"/><path d="M1,15.4 L2,10.6 H6.4 V15.4Z M15,15.4 L14,10.6 H9.6 V15.4Z" fill="#6e98e0" stroke="#1a3e96" stroke-width=".9"/><path d="M8,9.6 V2.4" stroke="#111" stroke-width="1.2"/><path d="M8,0.4 L5.8,3.4 H10.2Z" fill="#111"/></svg>
<div class="t" style="left:963.4px;top:76px;font-size:12.00px;color:#333;letter-spacing:-0.040px;">Nálitek</div>
<svg class="a" style="left:941px;top:97px" width="16" height="16" viewBox="0 0 16 16"><path d="M1,7 L4,3.5 L15.5,3.5 L15.5,6 L11,7.5 L8.5,13 L5,15 L1,15Z" fill="#cfd9e8" stroke="#1a3e96" stroke-width="1"/><path d="M1,7 L8,7 L8,13.5 L5,15 L1,15Z" fill="#6d9ae0" stroke="#1a3e96" stroke-width=".8"/><path d="M8,7 L11,3.8" stroke="#1a3e96" stroke-width=".8"/><rect x="2.5" y="8.5" width="4" height="4.5" fill="#2d5aae"/></svg>
<div class="t" style="left:963.4px;top:100px;font-size:12.00px;color:#333;letter-spacing:-0.410px;">Opěra</div>
<svg class="a" style="left:1008px;top:49px" width="16" height="16" viewBox="0 0 16 16"><defs><linearGradient id="ghk" x1="0" y1="0" x2="1" y2="0"><stop offset="0" stop-color="#dfe9f8"/><stop offset="1" stop-color="#6e98e0"/></linearGradient></defs><path d="M1,11.4 H11.4 L14.8,14.8 H4.4Z" fill="#fff" stroke="#1a3e96" stroke-width="1"/><path d="M6,12 V7 L4.2,6.4 C3.4,3 5.4,0.8 8.4,0.6 C10.6,0.6 11.6,2 11.6,4 V12Z" fill="url(#ghk)" stroke="#1a3e96" stroke-width="1"/><path d="M6,7 C7.6,6.6 8.2,5.4 8,4" fill="none" stroke="#1a3e96" stroke-width=".8"/></svg>
<div class="t" style="left:1029.0px;top:52px;font-size:12.00px;color:#333;letter-spacing:-0.113px;">Háčkový spoj</div>
<svg class="a" style="left:1008px;top:73px" width="16" height="16" viewBox="0 0 16 16"><path d="M1.5,15 L1.5,7 C1.5,3 5,1 9,1 C13,1 15.5,4 15.5,7 L15.5,10 L11,15Z" fill="#6d9ae0" stroke="#1a3e96" stroke-width="1"/><path d="M4.5,3 C8,2.5 11,5 11,9 L11,15" fill="none" stroke="#1a3e96" stroke-width=".9"/><path d="M1.5,15 L1.5,7 C1.5,5 3,3.5 4.5,3 C8,2.5 11,5 11,9 L11,15Z" fill="#dfe7f3"/><rect x="2.5" y="7.5" width="6" height="7.5" fill="#fff" stroke="#444" stroke-width=".8"/><path d="M3.8,9.5 H7.2 M3.8,11.2 H7.2 M3.8,12.9 H7.2" stroke="#444" stroke-width=".7"/></svg>
<div class="t" style="left:1029.0px;top:76px;font-size:12.00px;color:#333;letter-spacing:-0.033px;">Zaoblení podle pravidla</div>
<svg class="a" style="left:1008px;top:97px" width="16" height="16" viewBox="0 0 16 16"><path d="M0.5,1 L15.5,1 L15.5,15 L0.5,15 L0.5,12.5 L11.5,12.5 L11.5,4 L0.5,4Z" fill="#cdd3dc" stroke="#555" stroke-width=".6"/><path d="M0.5,1 L15.5,1 L15.5,4 L0.5,4Z" fill="#3a63b4"/><path d="M5,8.2 L11.5,8.2" stroke="#1f3c7e" stroke-width="1.2"/><path d="M11.5,4 L15.5,4 L15.5,15 L11.5,15Z" fill="#b9c0cb"/></svg>
<div class="t" style="left:1029.0px;top:100px;font-size:12.00px;color:#333;letter-spacing:-0.337px;">Pero</div>
<div class="t" style="left:1004.0px;top:124px;font-size:12.00px;color:#333;letter-spacing:-0.295px;">Plastická součást</div>
<div class="a" style="left:1164px;top:46px;width:22px;height:22px;background:linear-gradient(#fafafa,#efefef);border:1px solid #dcdcdc"></div>
<svg class="a" style="left:1167px;top:49px" width="16" height="16" viewBox="0 0 16 16"><path d="M9,1.5 L9,14 M2.5,7.8 L15.5,7.8" stroke="#d9701e" stroke-width=".9"/><path d="M9,3.5 L13.3,7.8 L9,12 L4.7,7.8Z" fill="#fbc9a0" stroke="#d9701e" stroke-width="1"/><circle cx="9" cy="7.8" r="1.3" fill="#b8480c"/><path d="M0.5,12.5 H4.5 M2.5,10.5 V14.5 M11.5,2.5 H15" stroke="#111" stroke-width="1.1"/></svg>
<div class="a" style="left:1164px;top:70px;width:22px;height:22px;background:linear-gradient(#fafafa,#efefef);border:1px solid #dcdcdc"></div>
<svg class="a" style="left:1167px;top:73px" width="16" height="16" viewBox="0 0 16 16"><path d="M9,2 L9,13.5 M3.5,7.8 L14.5,7.8" stroke="#d9701e" stroke-width=".9"/><path d="M9,4 L12.8,7.8 L9,11.6 L5.2,7.8Z" fill="#fbc9a0" stroke="#d9701e" stroke-width="1"/><circle cx="9" cy="7.8" r="1.2" fill="#b8480c"/><path d="M3,1 L1,1 L1,15 L3,15 M13,1 L15,1 L15,15 L13,15" fill="none" stroke="#2d78c8" stroke-width="1.2"/><path d="M2,12.5 H6 M4,10.5 V14.5 M10,3 H13.5" stroke="#111" stroke-width="1.1"/></svg>
<div class="a" style="left:1164px;top:94px;width:22px;height:22px;background:linear-gradient(#fafafa,#efefef);border:1px solid #dcdcdc"></div>
<svg class="a" style="left:1167px;top:97px" width="16" height="16" viewBox="0 0 16 16"><rect x="6.5" y="1.5" width="9" height="11" fill="#fff" stroke="#444" stroke-width=".9"/><path d="M8,4 H14 M8,6.5 H14 M8,9 H14" stroke="#666" stroke-width=".9" stroke-dasharray="2 1"/><path d="M0.5,0.5 L13,14" stroke="#5a7aa6" stroke-width="1.6"/><path d="M1,15 L6,7.5" stroke="#d81e1e" stroke-width="1.4"/><path d="M5.5,15.5 L6.5,8" stroke="#6a3ab8" stroke-width="1.3"/></svg>
<div class="t" style="left:1167.0px;top:124px;font-size:12.00px;color:#333;letter-spacing:-0.926px;">S...</div>
<svg class="a" style="left:1208px;top:47px" width="36" height="33" viewBox="0 0 36 33"><defs><linearGradient id="gsh" x1="0" y1="0" x2="1" y2="1"><stop offset="0" stop-color="#6f9ad8"/><stop offset=".5" stop-color="#c6daf2"/><stop offset="1" stop-color="#7fa6dc"/></linearGradient></defs><path d="M3,14 L11.5,3 C14,0 17,3 19.5,8 C22,13 26,13.5 31,11.5 C28,17 24,20.5 20.5,20 C17,19.5 15,15 12.5,12.5Z" fill="url(#gsh)" stroke="#7a9cd0" stroke-width=".8"/><path d="M3,14 L12.5,12.5 L12.5,21 L3.5,31Z" fill="#dbe7f6" stroke="#3c62a8" stroke-width="1"/><path d="M3,14 L11.5,3 C12.3,6 12.6,9 12.5,12.5Z" fill="#7fa6dc" stroke="#3c62a8" stroke-width=".8"/><path d="M3.3,23.5 L12.5,17" stroke="#3c62a8" stroke-width=".9"/><circle cx="19" cy="27.5" r="3.8" fill="#b9a3e6" stroke="#5a3fb0" stroke-width="1"/><path d="M22.5,27.5 L28,27.5" stroke="#2c1a78" stroke-width="2.2"/><path d="M31.5,27.5 L27,24 L27,31Z" fill="#2c1a78"/></svg>
<div class="t" style="left:1198.0px;top:86px;font-size:12.00px;color:#333;letter-spacing:-0.336px;">Převést na</div>
<div class="t" style="left:1211.0px;top:102px;font-size:12.00px;color:#333;letter-spacing:-0.198px;">plech</div>
<div class="t" style="left:1206.4px;top:124px;font-size:12.00px;color:#333;letter-spacing:-0.469px;">Převést</div>
<div class="a" style="left:12px;top:600px;width:1px;height:298px;background:#9a9a9a"></div>
<div class="a" style="left:12px;top:627.5px;width:11.5px;height:1px;background:#9a9a9a"></div>
<svg class="a" style="left:8px;top:623.5px" width="9" height="9" viewBox="0 0 9 9"><rect x="0.5" y="0.5" width="8" height="8" fill="#fff" stroke="#8a8a8a" stroke-width="1"/><path d="M2,4.5 H7 M4.5,2 V7" stroke="#000" stroke-width="1"/></svg>
<svg class="a" style="left:28px;top:619.5px" width="16" height="16" viewBox="0 0 16 16"><path d="M1.5,5.5 L5.5,1.5 L14.5,1.5 L14.5,10.5 L10.5,14.5 L1.5,14.5Z M1.5,5.5 L10.5,5.5 L10.5,14.5 M10.5,5.5 L14.5,1.5 M5.5,1.5 L5.5,10.5 L1.5,14.5 M5.5,10.5 L14.5,10.5" fill="none" stroke="#555" stroke-width="1"/></svg>
<div class="t" style="left:46.3px;top:623px;font-size:10.80px;color:#787878;letter-spacing:-0.227px;">VysunutíDoPlochy1</div>
<div class="a" style="left:12px;top:645.5px;width:11.5px;height:1px;background:#9a9a9a"></div>
<svg class="a" style="left:8px;top:641.5px" width="9" height="9" viewBox="0 0 9 9"><rect x="0.5" y="0.5" width="8" height="8" fill="#fff" stroke="#8a8a8a" stroke-width="1"/><path d="M2,4.5 H7 M4.5,2 V7" stroke="#000" stroke-width="1"/></svg>
<svg class="a" style="left:28px;top:637.5px" width="16" height="16" viewBox="0 0 16 16"><path d="M1.5,5.5 L5.5,1.5 L14.5,1.5 L14.5,10.5 L10.5,14.5 L1.5,14.5Z M1.5,5.5 L10.5,5.5 L10.5,14.5 M10.5,5.5 L14.5,1.5 M5.5,1.5 L5.5,10.5 L1.5,14.5 M5.5,10.5 L14.5,10.5" fill="none" stroke="#555" stroke-width="1"/></svg>
<div class="t" style="left:46.3px;top:641px;font-size:10.80px;color:#787878;letter-spacing:-0.197px;">VysunutíDoPlochy2</div>
<div class="a" style="left:12px;top:663.5px;width:11.5px;height:1px;background:#9a9a9a"></div>
<svg class="a" style="left:8px;top:659.5px" width="9" height="9" viewBox="0 0 9 9"><rect x="0.5" y="0.5" width="8" height="8" fill="#fff" stroke="#8a8a8a" stroke-width="1"/><path d="M2,4.5 H7 M4.5,2 V7" stroke="#000" stroke-width="1"/></svg>
<svg class="a" style="left:28px;top:655.5px" width="16" height="16" viewBox="0 0 16 16"><defs><linearGradient id="glf" x1="0" y1="0" x2="1" y2="1"><stop offset="0" stop-color="#b8b8b8"/><stop offset="1" stop-color="#f0f0f0"/></linearGradient></defs><path d="M2.5,0.8 L14.6,0.8 L14.6,10.4 L2.5,10.4Z" fill="url(#glf)" stroke="#555" stroke-width="1"/><path d="M0.8,9.6 C2,5 8,4.4 9.6,9.8" fill="#e8e8e8" stroke="#444" stroke-width="1.1"/><rect x="0.4" y="9.6" width="4.4" height="4.6" fill="#8c8c8c"/><ellipse cx="10.2" cy="12.4" rx="5.2" ry="2.3" fill="#fafafa" stroke="#5a5a5a" stroke-width=".9"/><path d="M8.5,12.2 C9.5,11.4 11,11.4 12,12" fill="none" stroke="#999" stroke-width=".7"/></svg>
<div class="t" style="left:46.3px;top:659px;font-size:10.80px;color:#787878;letter-spacing:-0.205px;">ŠablonovanáPlocha1</div>
<div class="a" style="left:12px;top:681.5px;width:11.5px;height:1px;background:#9a9a9a"></div>
<svg class="a" style="left:8px;top:677.5px" width="9" height="9" viewBox="0 0 9 9"><rect x="0.5" y="0.5" width="8" height="8" fill="#fff" stroke="#8a8a8a" stroke-width="1"/><path d="M2,4.5 H7 M4.5,2 V7" stroke="#000" stroke-width="1"/></svg>
<svg class="a" style="left:28px;top:673.5px" width="16" height="16" viewBox="0 0 16 16"><path d="M7.5,0.4 V15.6" stroke="#c8201c" stroke-width="1"/><path d="M0.6,1.8 H3 L4.8,4.6 V9.4 L3.4,10 V13.6 H0.6Z" fill="#ffe63a" stroke="#111" stroke-width="1.2" stroke-linejoin="miter"/><path d="M14.6,1.8 H12.2 L10.4,4.6 V9.4 L11.8,10 V13.6 H14.6Z" fill="#4a90d8" stroke="#111" stroke-width="1.2" stroke-linejoin="miter"/><path d="M1.6,3 V12.6" stroke="#fff8a0" stroke-width=".8"/><path d="M13.4,3 V12.6" stroke="#9cc8f4" stroke-width=".8"/></svg>
<div class="t" style="left:46.3px;top:677px;font-size:10.80px;color:#000;letter-spacing:-0.124px;">Zrcadlit1</div>
<div class="a" style="left:12px;top:699.5px;width:11.5px;height:1px;background:#9a9a9a"></div>
<svg class="a" style="left:8px;top:695.5px" width="9" height="9" viewBox="0 0 9 9"><rect x="0.5" y="0.5" width="8" height="8" fill="#fff" stroke="#8a8a8a" stroke-width="1"/><path d="M2,4.5 H7 M4.5,2 V7" stroke="#000" stroke-width="1"/></svg>
<svg class="a" style="left:28px;top:691.5px" width="16" height="16" viewBox="0 0 16 16"><path d="M2.5,4.5 L5.5,1.5 L14.5,1.5 L14.5,8.5 L11.5,11.5 L2.5,11.5Z M2.5,4.5 L11.5,4.5 L11.5,11.5 M11.5,4.5 L14.5,1.5 M5.5,1.5 L5.5,8.5 L2.5,11.5 M5.5,8.5 L14.5,8.5" fill="none" stroke="#666" stroke-width="1"/><rect x="0.4" y="9.6" width="4.4" height="4.6" fill="#8c8c8c"/><ellipse cx="10.2" cy="12.4" rx="5.2" ry="2.3" fill="#fafafa" stroke="#5a5a5a" stroke-width=".9"/><path d="M8.5,12.2 C9.5,11.4 11,11.4 12,12" fill="none" stroke="#999" stroke-width=".7"/></svg>
<div class="t" style="left:46.3px;top:695px;font-size:10.80px;color:#787878;letter-spacing:-0.197px;">VysunutíDoPlochy3</div>
<div class="a" style="left:12px;top:717.5px;width:11.5px;height:1px;background:#9a9a9a"></div>
<svg class="a" style="left:8px;top:713.5px" width="9" height="9" viewBox="0 0 9 9"><rect x="0.5" y="0.5" width="8" height="8" fill="#fff" stroke="#8a8a8a" stroke-width="1"/><path d="M2,4.5 H7 M4.5,2 V7" stroke="#000" stroke-width="1"/></svg>
<svg class="a" style="left:28px;top:709.5px" width="16" height="16" viewBox="0 0 16 16"><path d="M1,0.8 L14.6,0.8 L14.6,10.4 L1,10.4Z" fill="#ececec" stroke="#3a3a3a" stroke-width="1.2"/><path d="M7.6,1 V10 M5.6,2.6 H9.6 M5.6,4.6 H9.6 M5.6,6.6 H9.6 M5.6,8.6 H9.6" stroke="#333" stroke-width="1"/><rect x="0.4" y="9.6" width="4.4" height="4.6" fill="#8c8c8c"/><ellipse cx="10.2" cy="12.4" rx="5.2" ry="2.3" fill="#fafafa" stroke="#5a5a5a" stroke-width=".9"/><path d="M8.5,12.2 C9.5,11.4 11,11.4 12,12" fill="none" stroke="#999" stroke-width=".7"/></svg>
<div class="t" style="left:46.3px;top:713px;font-size:10.80px;color:#787878;letter-spacing:-0.226px;">Sešít plochu1</div>
<div class="a" style="left:12px;top:735.5px;width:11.5px;height:1px;background:#9a9a9a"></div>
<svg class="a" style="left:28px;top:727.5px" width="16" height="16" viewBox="0 0 16 16"><path d="M1,6 L5,2 L8,5 L4,9Z" fill="none" stroke="#777" stroke-width=".9"/><path d="M7,1 L10,12 M13,2 L8,11" stroke="#777" stroke-width="1"/><path d="M10,3 L14,3 L14,7" fill="none" stroke="#777" stroke-width=".9"/><circle cx="13" cy="9.5" r="1.5" fill="none" stroke="#777" stroke-width=".8"/><circle cx="9.5" cy="13.5" r="1.5" fill="none" stroke="#777" stroke-width=".8"/></svg>
<div class="t" style="left:46.3px;top:731px;font-size:10.80px;color:#787878;letter-spacing:-0.114px;">Oříznout1</div>
<div class="a" style="left:12px;top:753.5px;width:11.5px;height:1px;background:#9a9a9a"></div>
<svg class="a" style="left:8px;top:749.5px" width="9" height="9" viewBox="0 0 9 9"><rect x="0.5" y="0.5" width="8" height="8" fill="#fff" stroke="#8a8a8a" stroke-width="1"/><path d="M2,4.5 H7 M4.5,2 V7" stroke="#000" stroke-width="1"/></svg>
<svg class="a" style="left:28px;top:745.5px" width="16" height="16" viewBox="0 0 16 16"><rect x="1" y="0.8" width="14" height="14.4" fill="#fbb278" stroke="#111" stroke-width="1.2"/><rect x="2.6" y="2.4" width="10.8" height="11.2" fill="none" stroke="#fde0c6" stroke-width="1"/><path d="M8,1.5 V14.5 M6,3.5 H10 M6,5.5 H10 M6,7.5 H10 M6,9.5 H10 M6,11.5 H10" stroke="#222" stroke-width="1"/></svg>
<div class="t" style="left:46.3px;top:749px;font-size:10.80px;color:#000;letter-spacing:-0.188px;">Sešít plochu2</div>
<div class="a" style="left:12px;top:771.5px;width:11.5px;height:1px;background:#9a9a9a"></div>
<svg class="a" style="left:8px;top:767.5px" width="9" height="9" viewBox="0 0 9 9"><rect x="0.5" y="0.5" width="8" height="8" fill="#fff" stroke="#8a8a8a" stroke-width="1"/><path d="M2,4.5 H7 M4.5,2 V7" stroke="#000" stroke-width="1"/></svg>
<svg class="a" style="left:28px;top:763.5px" width="16" height="16" viewBox="0 0 16 16"><rect x="5.5" y="0.5" width="10" height="10" fill="#f2f2f2" stroke="#8a8a8a" stroke-width="1"/><rect x="1" y="4.5" width="11" height="11" fill="#d9d9d9" stroke="#8a8a8a" stroke-width="1"/><rect x="5.5" y="4.5" width="6.5" height="6" fill="#c4c4c4" stroke="#aaa" stroke-width=".6"/></svg>
<div class="t" style="left:46.3px;top:767px;font-size:10.80px;color:#000;letter-spacing:-0.068px;">Pracovní rovina14</div>
<div class="a" style="left:12px;top:789.5px;width:11.5px;height:1px;background:#9a9a9a"></div>
<svg class="a" style="left:8px;top:785.5px" width="9" height="9" viewBox="0 0 9 9"><rect x="0.5" y="0.5" width="8" height="8" fill="#fff" stroke="#8a8a8a" stroke-width="1"/><path d="M2,4.5 H7 M4.5,2 V7" stroke="#000" stroke-width="1"/></svg>
<svg class="a" style="left:28px;top:781.5px" width="16" height="16" viewBox="0 0 16 16"><path d="M1,4 L4,1 L11,1 L11,12 L8,15 L1,15Z" fill="#ffd83a" stroke="#222" stroke-width="1.1"/><path d="M1,4 L8,4 L8,15 M8,4 L11,1" fill="none" stroke="#222" stroke-width="1"/><path d="M1,4 L4,1 L11,1 L8,4Z" fill="#5b9ae0" stroke="#222" stroke-width=".9"/><path d="M8,4 L11,1 L11,12 L8,15Z" fill="#c9a410"/><path d="M14,15 V2" stroke="#c8201c" stroke-width="1.1"/><path d="M14,0 L12.2,3.4 L15.8,3.4Z" fill="#c8201c"/></svg>
<div class="t" style="left:46.3px;top:785px;font-size:10.80px;color:#000;letter-spacing:-0.126px;">Vysunutí1</div>
<div class="a" style="left:12px;top:807.5px;width:11.5px;height:1px;background:#9a9a9a"></div>
<svg class="a" style="left:8px;top:803.5px" width="9" height="9" viewBox="0 0 9 9"><rect x="0.5" y="0.5" width="8" height="8" fill="#fff" stroke="#8a8a8a" stroke-width="1"/><path d="M2,4.5 H7 M4.5,2 V7" stroke="#000" stroke-width="1"/></svg>
<svg class="a" style="left:28px;top:799.5px" width="16" height="16" viewBox="0 0 16 16"><path d="M7.5,0.4 V15.6" stroke="#c8201c" stroke-width="1"/><path d="M0.6,1.8 H3 L4.8,4.6 V9.4 L3.4,10 V13.6 H0.6Z" fill="#ffe63a" stroke="#111" stroke-width="1.2" stroke-linejoin="miter"/><path d="M14.6,1.8 H12.2 L10.4,4.6 V9.4 L11.8,10 V13.6 H14.6Z" fill="#4a90d8" stroke="#111" stroke-width="1.2" stroke-linejoin="miter"/><path d="M1.6,3 V12.6" stroke="#fff8a0" stroke-width=".8"/><path d="M13.4,3 V12.6" stroke="#9cc8f4" stroke-width=".8"/></svg>
<div class="t" style="left:46.3px;top:803px;font-size:10.80px;color:#000;letter-spacing:-0.090px;">Zrcadlit2</div>
<div class="a" style="left:12px;top:825.5px;width:11.5px;height:1px;background:#9a9a9a"></div>
<svg class="a" style="left:8px;top:821.5px" width="9" height="9" viewBox="0 0 9 9"><rect x="0.5" y="0.5" width="8" height="8" fill="#fff" stroke="#8a8a8a" stroke-width="1"/><path d="M2,4.5 H7 M4.5,2 V7" stroke="#000" stroke-width="1"/></svg>
<svg class="a" style="left:28px;top:817.5px" width="16" height="16" viewBox="0 0 16 16"><path d="M1,4 L4,1 L11,1 L11,12 L8,15 L1,15Z" fill="#ffd83a" stroke="#222" stroke-width="1.1"/><path d="M1,4 L8,4 L8,15 M8,4 L11,1" fill="none" stroke="#222" stroke-width="1"/><path d="M1,4 L4,1 L11,1 L8,4Z" fill="#5b9ae0" stroke="#222" stroke-width=".9"/><path d="M8,4 L11,1 L11,12 L8,15Z" fill="#c9a410"/><path d="M14,15 V2" stroke="#c8201c" stroke-width="1.1"/><path d="M14,0 L12.2,3.4 L15.8,3.4Z" fill="#c8201c"/></svg>
<div class="t" style="left:46.3px;top:821px;font-size:10.80px;color:#000;letter-spacing:-0.103px;">Vysunutí2</div>
<div class="a" style="left:12px;top:843.5px;width:11.5px;height:1px;background:#9a9a9a"></div>
<svg class="a" style="left:8px;top:839.5px" width="9" height="9" viewBox="0 0 9 9"><rect x="0.5" y="0.5" width="8" height="8" fill="#fff" stroke="#8a8a8a" stroke-width="1"/><path d="M2,4.5 H7 M4.5,2 V7" stroke="#000" stroke-width="1"/></svg>
<svg class="a" style="left:28px;top:835.5px" width="16" height="16" viewBox="0 0 16 16"><path d="M7.5,0.4 V15.6" stroke="#c8201c" stroke-width="1"/><path d="M0.6,1.8 H3 L4.8,4.6 V9.4 L3.4,10 V13.6 H0.6Z" fill="#ffe63a" stroke="#111" stroke-width="1.2" stroke-linejoin="miter"/><path d="M14.6,1.8 H12.2 L10.4,4.6 V9.4 L11.8,10 V13.6 H14.6Z" fill="#4a90d8" stroke="#111" stroke-width="1.2" stroke-linejoin="miter"/><path d="M1.6,3 V12.6" stroke="#fff8a0" stroke-width=".8"/><path d="M13.4,3 V12.6" stroke="#9cc8f4" stroke-width=".8"/></svg>
<div class="t" style="left:46.3px;top:839px;font-size:10.80px;color:#000;letter-spacing:-0.090px;">Zrcadlit3</div>
<div class="a" style="left:12px;top:861.5px;width:11.5px;height:1px;background:#9a9a9a"></div>
<svg class="a" style="left:8px;top:857.5px" width="9" height="9" viewBox="0 0 9 9"><rect x="0.5" y="0.5" width="8" height="8" fill="#fff" stroke="#8a8a8a" stroke-width="1"/><path d="M2,4.5 H7 M4.5,2 V7" stroke="#000" stroke-width="1"/></svg>
<svg class="a" style="left:28px;top:853.5px" width="16" height="16" viewBox="0 0 16 16"><rect x="5.5" y="0.5" width="10" height="10" fill="#f2f2f2" stroke="#8a8a8a" stroke-width="1"/><rect x="1" y="4.5" width="11" height="11" fill="#d9d9d9" stroke="#8a8a8a" stroke-width="1"/><rect x="5.5" y="4.5" width="6.5" height="6" fill="#c4c4c4" stroke="#aaa" stroke-width=".6"/></svg>
<div class="t" style="left:46.3px;top:857px;font-size:10.80px;color:#000;letter-spacing:-0.068px;">Pracovní rovina15</div>
<div class="a" style="left:12px;top:879.5px;width:11.5px;height:1px;background:#9a9a9a"></div>
<svg class="a" style="left:28px;top:871.5px" width="16" height="16" viewBox="0 0 16 16"><path d="M1,4.5 L4.5,1 L15,1 L15,11 L11.5,15 L1,15Z" fill="#5b9ae0" stroke="#111" stroke-width="1.1"/><path d="M1,4.5 L11.5,4.5 L11.5,15 M11.5,4.5 L15,1" fill="none" stroke="#111" stroke-width="1"/><path d="M1,4.5 L4.5,1 L15,1 L11.5,4.5Z" fill="#9cc4f0"/><path d="M1.5,11 C4,12.5 6,12 7.5,10 C9,8.5 10,9.5 11.5,9 L11.5,14.5 L1.5,14.5Z" fill="#ffd83a"/><path d="M11.5,9 L15,6 L15,11 L11.5,14.5Z" fill="#e0b820"/><path d="M1.5,11 C4,12.5 6,12 7.5,10 C9,8.5 10,9.5 11.5,9" fill="none" stroke="#222" stroke-width=".8"/></svg>
<div class="t" style="left:46.3px;top:875px;font-size:10.80px;color:#000;letter-spacing:-0.181px;">Rozdělit1</div>
<div class="a" style="left:12px;top:897.5px;width:11.5px;height:1px;background:#9a9a9a"></div>
<svg class="a" style="left:28px;top:889.5px" width="16" height="16" viewBox="0 0 16 16"><path d="M5,0.8 L11,0.8 L15.2,5 L15.2,11 L11,15.2 L5,15.2 L0.8,11 L0.8,5Z" fill="#e63b3b" stroke="#9a1414" stroke-width="1"/><path d="M5,0.8 L11,0.8 L15.2,5 L15.2,8 L0.8,8 L0.8,5Z" fill="#f07a7a" opacity=".7"/><path d="M4.6,4.6 L11.4,11.4 M11.4,4.6 L4.6,11.4" stroke="#fff" stroke-width="2.4" stroke-linecap="round"/></svg>
<div class="t" style="left:46.3px;top:893px;font-size:10.80px;color:#000;letter-spacing:-0.210px;">Konec součásti</div>
<svg class="a" style="left:28px;top:601px" width="16" height="16" viewBox="0 0 16 16"><rect x="1" y="2" width="14" height="12" fill="#ddd" stroke="#666" stroke-width="1"/><rect x="0" y="9" width="5" height="5" fill="#888"/><ellipse cx="9" cy="11" rx="4" ry="1.6" fill="#eee" stroke="#777" stroke-width=".7"/></svg>
<div class="t" style="left:46.3px;top:605px;font-size:10.80px;color:#000;letter-spacing:0.198px;">Náčrt8</div>
<div class="a" style="left:0px;top:24px;width:423.8px;height:586px;background:#f2f2f2;border-left:1px solid #8c8c8c;border-right:1px solid #b4b4b4;box-shadow:0.5px 1px 2px rgba(0,0,0,.25)"></div>
<div class="a" style="left:1px;top:24px;width:141px;height:586px;background:#dcdcdc"></div>
<div class="a" style="left:1px;top:24px;width:422px;height:37px;background:#dcdcdc"></div>
<div class="a" style="left:142px;top:60.5px;width:281px;height:8px;background:#f1f1f1;border-left:1px solid #f8f8f8"></div>
<div class="a" style="left:0px;top:609.2px;width:197px;height:1px;background:#7c7c7c"></div>
<div class="a" style="left:144.5px;top:33.5px;width:271.5px;height:19px;background:#fff;border-top:1px solid #cfcfcf"></div>
<svg class="a" style="left:401px;top:36px" width="14" height="15" viewBox="0 0 14 15"><circle cx="5.8" cy="5.8" r="4.2" fill="#f4f7fa" stroke="#8a8f96" stroke-width="1.3"/><path d="M8.8,9 L12.5,13" stroke="#8a8f96" stroke-width="2" stroke-linecap="round"/></svg>
<div class="a" style="left:91px;top:68px;width:44px;height:22px;background:#dedede;border:1px solid #b4b4b4"></div>
<div class="a" style="left:112.5px;top:69px;width:1px;height:20px;background:#b4b4b4"></div>
<svg class="a" style="left:94px;top:70px" width="18" height="18" viewBox="0 0 18 18"><path d="M4.5,1.5 L11,1.5 L14.5,5 L14.5,14.5 L4.5,14.5Z" fill="#f4f4f4" stroke="#555" stroke-width="1"/><path d="M11,1.5 L11,5 L14.5,5" fill="none" stroke="#555" stroke-width=".8"/><circle cx="5.5" cy="11.5" r="4" fill="#fff" stroke="#a03030" stroke-width="1"/><path d="M5.5,9 V11.5 H7.5" fill="none" stroke="#333" stroke-width=".9"/></svg>
<svg class="a" style="left:115px;top:70px" width="18" height="18" viewBox="0 0 18 18"><path d="M1.5,14.5 L1.5,3.5 L6,3.5 L7.5,5.5 L14,5.5 L14,7.5" fill="#e6e6e6" stroke="#555" stroke-width="1"/><path d="M1.5,14.5 L4.5,7.5 L16.5,7.5 L13.5,14.5Z" fill="#d0d0d0" stroke="#555" stroke-width="1"/><path d="M2.5,12.5 L4.8,9.5 L15,9.5" fill="none" stroke="#888" stroke-width=".8"/></svg>
<div class="a" style="left:139px;top:68px;width:273px;height:491px;background:#fff;border:1px solid #2e6cb0;border-right-width:1.4px;border-left-width:1.4px"></div>
<div class="t" style="left:150.5px;top:82px;font-size:10.90px;color:#000;letter-spacing:-0.043px;font-weight:bold;">Exportovat</div>
<div class="a" style="left:150px;top:104px;width:251px;height:1px;background:#e3e3e3"></div>
<div class="a" style="left:141px;top:186px;width:270px;height:64px;background:#c2dcf4;border:1px solid #3d8bd6"></div>
<div class="t" style="left:196.0px;top:121px;font-size:10.90px;color:#000;letter-spacing:-0.059px;font-weight:bold;">Obrázek</div>
<div class="t" style="left:196.0px;top:135px;font-size:10.90px;color:#222;letter-spacing:0.110px;">Exportuje soubor do formátu souboru</div>
<div class="t" style="left:196.0px;top:150px;font-size:10.90px;color:#222;letter-spacing:-0.149px;">obrázků, jako jsou formáty BMP, JPEG,</div>
<div class="t" style="left:196.0px;top:164px;font-size:10.90px;color:#222;letter-spacing:-0.289px;">PNG nebo TIFF.</div>
<div class="t" style="left:196.0px;top:199px;font-size:10.90px;color:#000;letter-spacing:-0.267px;font-weight:bold;">PDF</div>
<div class="t" style="left:196.0px;top:214px;font-size:10.90px;color:#222;letter-spacing:0.110px;">Exportuje soubor do formátu souborů</div>
<div class="t" style="left:196.0px;top:228px;font-size:10.90px;color:#222;letter-spacing:-0.905px;">PDF.</div>
<div class="t" style="left:196.0px;top:263px;font-size:10.90px;color:#000;letter-spacing:-0.129px;font-weight:bold;">Formát CAD</div>
<div class="t" style="left:196.0px;top:278px;font-size:10.90px;color:#222;letter-spacing:0.113px;">Exportuje soubor do jiného formátu</div>
<div class="t" style="left:196.0px;top:292px;font-size:10.90px;color:#222;letter-spacing:0.016px;">souborů CAD, jako jsou například formáty</div>
<div class="t" style="left:196.0px;top:306px;font-size:10.90px;color:#222;letter-spacing:-0.360px;">Parasolid, PRO-E nebo STEP.</div>
<div class="t" style="left:196.0px;top:341px;font-size:10.90px;color:#000;letter-spacing:0.075px;font-weight:bold;">Exportovat do formátu DWF</div>
<div class="t" style="left:196.0px;top:356px;font-size:10.90px;color:#222;letter-spacing:0.110px;">Exportuje soubor do formátu souborů</div>
<div class="t" style="left:196.0px;top:370px;font-size:10.90px;color:#222;letter-spacing:-0.409px;">DWF.</div>
<div class="t" style="left:196.0px;top:405px;font-size:10.90px;color:#000;letter-spacing:-0.100px;font-weight:bold;">Odeslat soubor DWF</div>
<div class="t" style="left:196.0px;top:420px;font-size:10.90px;color:#222;letter-spacing:-0.036px;">Spustí výchozí e-mailovou aplikaci a</div>
<div class="t" style="left:196.0px;top:434px;font-size:10.90px;color:#222;letter-spacing:-0.007px;">soubor DWF vloží jako přílohu.</div>
<svg class="a" style="left:153px;top:134px" width="34" height="26" viewBox="0 0 34 26"><defs><linearGradient id="ga" x1="0" y1="0" x2="0" y2="1"><stop offset="0" stop-color="#6cb2ff"/><stop offset="1" stop-color="#1f6fd8"/></linearGradient></defs><defs><linearGradient id="gmt" x1="0" y1="0" x2="1" y2="1"><stop offset="0" stop-color="#ffffff"/><stop offset=".45" stop-color="#e4dcf0"/><stop offset="1" stop-color="#8a74b0"/></linearGradient></defs><rect x="1.6" y="1.8" width="23" height="23" fill="#fff" stroke="#111" stroke-width="1.2"/><circle cx="16" cy="7.6" r="3.8" fill="#ffc83a"/><circle cx="16" cy="7.8" r="2.4" fill="#fff0b0"/><path d="M2.2,15.5 L7.5,10 L13,16 L16,12.6 L24,21.5 L24,24.2 L2.2,24.2Z" fill="url(#gmt)"/><path d="M2.2,15.5 L7.5,10 L19,24 M13.6,15.4 L16,12.6 L24,21.5" fill="none" stroke="#111" stroke-width="1.2"/><path d="M9,12 L19,24.2 L24,24.2 L24,22Z" fill="#3a2c58" opacity=".8"/><path d="M15,11 L26,11 L26,7.4 L32.8,13.6 L26,19.8 L26,16 L15,16Z" fill="url(#ga)" stroke="#1a5cc0" stroke-width=".8"/></svg>
<svg class="a" style="left:153px;top:201px" width="34" height="33" viewBox="0 0 34 33"><defs><linearGradient id="gp" x1="0" y1="0" x2="1" y2="1"><stop offset="0" stop-color="#ffffff"/><stop offset="1" stop-color="#d8d8d8"/></linearGradient></defs><path d="M9.5,2.5 L24,2.5 L31.5,10 L31.5,30.5 L9.5,30.5Z" fill="url(#gp)" stroke="#8a8a8a" stroke-width="1"/><path d="M24,2.5 L24,10 L31.5,10Z" fill="#eee" stroke="#8a8a8a" stroke-width=".8"/><rect x="2" y="6.4" width="21" height="8.6" rx=".8" fill="#c41c1c" stroke="#8e1010" stroke-width=".7"/><rect x="2.4" y="6.8" width="20.2" height="3.6" fill="#e25a5a" opacity=".55"/><text x="12.5" y="13.6" text-anchor="middle" font-family="Liberation Sans,sans-serif" font-weight="bold" font-size="7.4" fill="#fff" textLength="15">PDF</text><path d="M14,26 C17,22 19,19 19.5,17 C20,15.5 18.5,15.5 18.8,17.5 C19.3,20.5 23,23.5 26.5,23.8 C28.5,24 28,22.5 26,22.8 C22,23.3 17,24.5 14,26Z" fill="none" stroke="#c81e1e" stroke-width="1.1"/><text x="21.5" y="29.3" text-anchor="middle" font-family="Liberation Sans,sans-serif" font-weight="bold" font-size="4.8" fill="#333">Adobe</text></svg>
<svg class="a" style="left:153px;top:273px" width="34" height="32" viewBox="0 0 34 32"><defs><linearGradient id="ga" x1="0" y1="0" x2="0" y2="1"><stop offset="0" stop-color="#6cb2ff"/><stop offset="1" stop-color="#1f6fd8"/></linearGradient></defs><path d="M1.5,1.5 L11,1.5 L15.5,6 L15.5,17.5 L1.5,17.5Z" fill="#f2f2f2" stroke="#777" stroke-width="1"/><path d="M11,1.5 L11,6 L15.5,6" fill="none" stroke="#777" stroke-width=".8"/><rect x="4" y="4.5" width="3.6" height="3.6" fill="none" stroke="#444" stroke-width="1"/><rect x="4" y="10" width="3.6" height="3.6" fill="none" stroke="#444" stroke-width="1"/><rect x="9.5" y="10" width="3.6" height="3.6" fill="none" stroke="#444" stroke-width="1"/><path d="M7.5,17.5 L11,14 L25.5,14 L25.5,26.5 L22,30.5 L7.5,30.5Z" fill="#e9ecef" stroke="#666" stroke-width="1"/><path d="M7.5,17.5 L22,17.5 L22,30.5 M22,17.5 L25.5,14" fill="none" stroke="#888" stroke-width=".8"/><path d="M22,17.5 L25.5,14 L25.5,26.5 L22,30.5Z" fill="#c4c8cd"/><path d="M15,10.8 L25.5,10.8 L25.5,7.2 L32.6,13.4 L25.5,19.6 L25.5,15.8 L15,15.8Z" fill="url(#ga)" stroke="#1a5cc0" stroke-width=".8"/></svg>
<svg class="a" style="left:153px;top:347px" width="28" height="28" viewBox="0 0 28 28"><defs><radialGradient id="gg" cx=".4" cy=".3" r=".75"><stop offset="0" stop-color="#9fe0ff"/><stop offset=".45" stop-color="#2a98dc"/><stop offset="1" stop-color="#0d4c96"/></radialGradient></defs><circle cx="13.8" cy="13.6" r="11.8" fill="url(#gg)"/><path d="M4.72308,7.54872 C11.7829,3.51453 20.8598,7.54872 24.3897,16.6256" fill="none" stroke="#e8c020" stroke-width="1.41197"/><path d="M2.70598,15.6171 C9.76581,21.6684 18.8427,19.6513 22.8769,7.54872" fill="none" stroke="#3cc040" stroke-width="1.41197"/><path d="M8.75726,3.51453 C5.73162,11.5829 10.7744,20.6598 16.8256,24.694" fill="none" stroke="#d83020" stroke-width="1.31111"/><ellipse cx="13.8" cy="24.5" rx="9" ry="1.6" fill="#000" opacity=".12"/></svg>
<svg class="a" style="left:153px;top:406px" width="34" height="34" viewBox="0 0 34 34"><defs><radialGradient id="gg" cx=".4" cy=".3" r=".75"><stop offset="0" stop-color="#9fe0ff"/><stop offset=".45" stop-color="#2a98dc"/><stop offset="1" stop-color="#0d4c96"/></radialGradient></defs><circle cx="11.5" cy="11" r="9.6" fill="url(#gg)"/><path d="M4.11538,6.07692 C9.85897,2.79487 17.2436,6.07692 20.1154,13.4615" fill="none" stroke="#e8c020" stroke-width="1.14872"/><path d="M2.47436,12.641 C8.21795,17.5641 15.6026,15.9231 18.8846,6.07692" fill="none" stroke="#3cc040" stroke-width="1.14872"/><path d="M7.39744,2.79487 C4.9359,9.35897 9.03846,16.7436 13.9615,20.0256" fill="none" stroke="#d83020" stroke-width="1.06667"/><rect x="10.5" y="16" width="21.5" height="15.5" fill="#f4f4f4" stroke="#555" stroke-width="1.2"/><path d="M10.5,16 L21.2,25 L32,16 M10.5,31.5 L18.5,22.8 M32,31.5 L24,22.8" fill="none" stroke="#555" stroke-width="1"/></svg>
<div class="a" style="left:211px;top:573.8px;width:55px;height:25px;background:linear-gradient(#f6f6f6,#ededed);border:1px solid #a4a4a4;box-shadow:0 1px 0 rgba(0,0,0,.06)"></div>
<div class="t" style="left:216.7px;top:582px;font-size:10.90px;color:#222;letter-spacing:0.123px;">Možnosti</div>
<div class="a" style="left:281px;top:573.8px;width:130px;height:25px;background:linear-gradient(#f6f6f6,#ededed);border:1px solid #a4a4a4;box-shadow:0 1px 0 rgba(0,0,0,.06)"></div>
<div class="t" style="left:286.2px;top:582px;font-size:10.90px;color:#222;letter-spacing:0.086px;">Ukončit aplikaci Inventor</div>
<div class="a" style="left:2px;top:275.5px;width:138px;height:43.5px;background:#c2dcf4;border:1px solid #3d8bd6"></div>
<div class="t" style="left:53.4px;top:117px;font-size:10.80px;color:#2a2a2a;letter-spacing:-0.026px;">Nový</div>
<div class="t" style="left:53.4px;top:161px;font-size:10.80px;color:#2a2a2a;letter-spacing:0.014px;">Otevřít</div>
<div class="t" style="left:53.4px;top:205px;font-size:10.80px;color:#2a2a2a;letter-spacing:0.082px;">Uložit</div>
<div class="t" style="left:53.4px;top:249px;font-size:10.80px;color:#2a2a2a;letter-spacing:0.062px;">Uložit jako</div>
<div class="t" style="left:53.4px;top:292px;font-size:10.80px;color:#2a2a2a;letter-spacing:-0.013px;">Exportovat</div>
<div class="t" style="left:53.4px;top:339px;font-size:10.80px;color:#2a2a2a;letter-spacing:-0.420px;">Správa</div>
<div class="t" style="left:53.4px;top:384px;font-size:10.80px;color:#2a2a2a;letter-spacing:-0.002px;">iVlastnosti</div>
<div class="t" style="left:53.4px;top:419px;font-size:10.80px;color:#2a2a2a;letter-spacing:-0.352px;">Server</div>
<div class="t" style="left:53.4px;top:433px;font-size:10.80px;color:#2a2a2a;letter-spacing:-0.116px;">aplikace</div>
<div class="t" style="left:53.4px;top:448px;font-size:10.80px;color:#2a2a2a;letter-spacing:0.177px;">Vault</div>
<div class="t" style="left:53.4px;top:485px;font-size:10.80px;color:#2a2a2a;letter-spacing:-0.174px;">Tisk</div>
<div class="t" style="left:53.4px;top:532px;font-size:10.80px;color:#2a2a2a;letter-spacing:-0.150px;">Zavřít</div>
<svg class="a" style="left:126.5px;top:116.5px" width="6" height="10" viewBox="0 0 6 10"><path d="M0.5,0.8 L5,5 L0.5,9.2Z" fill="#333"/></svg>
<svg class="a" style="left:126.5px;top:160.5px" width="6" height="10" viewBox="0 0 6 10"><path d="M0.5,0.8 L5,5 L0.5,9.2Z" fill="#333"/></svg>
<svg class="a" style="left:126.5px;top:204.5px" width="6" height="10" viewBox="0 0 6 10"><path d="M0.5,0.8 L5,5 L0.5,9.2Z" fill="#333"/></svg>
<svg class="a" style="left:126.5px;top:248.5px" width="6" height="10" viewBox="0 0 6 10"><path d="M0.5,0.8 L5,5 L0.5,9.2Z" fill="#333"/></svg>
<svg class="a" style="left:126.5px;top:292.5px" width="6" height="10" viewBox="0 0 6 10"><path d="M0.5,0.8 L5,5 L0.5,9.2Z" fill="#333"/></svg>
<svg class="a" style="left:126.5px;top:339.5px" width="6" height="10" viewBox="0 0 6 10"><path d="M0.5,0.8 L5,5 L0.5,9.2Z" fill="#333"/></svg>
<svg class="a" style="left:126.5px;top:433px" width="6" height="10" viewBox="0 0 6 10"><path d="M0.5,0.8 L5,5 L0.5,9.2Z" fill="#333"/></svg>
<svg class="a" style="left:126.5px;top:485.5px" width="6" height="10" viewBox="0 0 6 10"><path d="M0.5,0.8 L5,5 L0.5,9.2Z" fill="#333"/></svg>
<svg class="a" style="left:126.5px;top:532.5px" width="6" height="10" viewBox="0 0 6 10"><path d="M0.5,0.8 L5,5 L0.5,9.2Z" fill="#333"/></svg>
<div class="a" style="left:12px;top:320.5px;width:127px;height:1px;background:#d2d2d2"></div>
<div class="a" style="left:12px;top:321.5px;width:127px;height:1px;background:#e9e9e9"></div>
<div class="a" style="left:12px;top:467px;width:127px;height:1px;background:#bdbdbd"></div>
<div class="a" style="left:12px;top:468px;width:127px;height:1px;background:#e9e9e9"></div>
<div class="a" style="left:12px;top:514.5px;width:127px;height:1px;background:#bdbdbd"></div>
<div class="a" style="left:12px;top:515.5px;width:127px;height:1px;background:#e9e9e9"></div>
<svg class="a" style="left:15px;top:108px" width="32" height="26" viewBox="0 0 32 26"><defs><linearGradient id="gpg" x1="0" y1="0" x2="0" y2="1"><stop offset="0" stop-color="#d5d8de"/><stop offset="1" stop-color="#fbfbfc"/></linearGradient></defs><path d="M1.5,1.5 L23,1.5 L30.5,9 L30.5,24.5 L1.5,24.5Z" fill="url(#gpg)" stroke="#4a4a4a" stroke-width="1.2"/><path d="M23,1.5 L23,9 L30.5,9Z" fill="#fff" stroke="#4a4a4a" stroke-width=".9"/></svg>
<svg class="a" style="left:15px;top:153px" width="32" height="23" viewBox="0 0 32 23"><defs><linearGradient id="gfo" x1="0" y1="0" x2="0" y2="1"><stop offset="0" stop-color="#eef0f3"/><stop offset="1" stop-color="#c9cdd3"/></linearGradient><linearGradient id="gff" x1="0" y1="0" x2="0" y2="1"><stop offset="0" stop-color="#a4a9b1"/><stop offset="1" stop-color="#7d838c"/></linearGradient></defs><path d="M1.5,20.5 L1.5,3 L10.5,2 L12.5,3.5 L23,3.5 L23,11" fill="url(#gfo)" stroke="#4a4a4a" stroke-width="1.1"/><path d="M1.5,21.5 L9,11 L30.5,11 L22.5,21.5Z" fill="url(#gff)" stroke="#4a4a4a" stroke-width="1.1"/><path d="M3.5,19.5 L10,12.8 L28,12.8" fill="none" stroke="#e6e8eb" stroke-width="1"/></svg>
<svg class="a" style="left:16px;top:194px" width="30" height="30" viewBox="0 0 30 30"><defs><linearGradient id="gdk" x1="0" y1="0" x2="0" y2="1"><stop offset="0" stop-color="#73777f"/><stop offset="1" stop-color="#555962"/></linearGradient><linearGradient id="gdl" x1="0" y1="0" x2="0" y2="1"><stop offset="0" stop-color="#d9dce1"/><stop offset="1" stop-color="#ffffff"/></linearGradient></defs><path d="M1.5,1.5 L28.5,1.5 L28.5,28.5 L4,28.5 L1.5,26 Z" fill="url(#gdk)" stroke="#3c3f45" stroke-width="1.1"/><rect x="5.5" y="1.5" width="19" height="12.6" fill="url(#gdl)"/><rect x="8" y="20.4" width="15" height="8.1" fill="#f2f3f5"/><rect x="9.5" y="21.6" width="3" height="6" fill="#2e3036"/></svg>
<svg class="a" style="left:15px;top:236px" width="34" height="32" viewBox="0 0 34 32"><defs><linearGradient id="gdk" x1="0" y1="0" x2="0" y2="1"><stop offset="0" stop-color="#73777f"/><stop offset="1" stop-color="#555962"/></linearGradient><linearGradient id="gdl" x1="0" y1="0" x2="0" y2="1"><stop offset="0" stop-color="#d9dce1"/><stop offset="1" stop-color="#ffffff"/></linearGradient></defs><g transform="translate(0,5)"><path d="M1.5,1.5 L25.5,1.5 L25.5,25.5 L4,25.5 L1.5,23 Z" fill="url(#gdk)" stroke="#3c3f45" stroke-width="1.1"/><rect x="5.5" y="1.5" width="16" height="11.34" fill="url(#gdl)"/><rect x="8" y="18.36" width="12" height="7.14" fill="#f2f3f5"/><rect x="9.5" y="19.44" width="3" height="5.4" fill="#2e3036"/></g><path d="M17,15 L28.5,2.5 L32,5.5 L20.5,18 L16,19.5Z" fill="#f6c13a" stroke="#8a5a10" stroke-width=".9"/><path d="M28.5,2.5 L32,5.5 L30.5,7.2 L27,4.2Z" fill="#c86a30"/><path d="M17,15 L20.5,18 L16,19.5Z" fill="#f4e6c8"/><path d="M18.5,15.5 L29,4" stroke="#ffe590" stroke-width="1"/></svg>
<svg class="a" style="left:15px;top:280px" width="33" height="32" viewBox="0 0 33 32"><defs><linearGradient id="gpg" x1="0" y1="0" x2="0" y2="1"><stop offset="0" stop-color="#d5d8de"/><stop offset="1" stop-color="#fbfbfc"/></linearGradient></defs><defs><linearGradient id="ga" x1="0" y1="0" x2="0" y2="1"><stop offset="0" stop-color="#6cb2ff"/><stop offset="1" stop-color="#1f6fd8"/></linearGradient></defs><path d="M1.5,1.5 L19,1.5 L26.5,9 L26.5,30.5 L1.5,30.5Z" fill="url(#gpg)" stroke="#555" stroke-width="1.1"/><path d="M19,1.5 L19,9 L26.5,9Z" fill="#fff" stroke="#555" stroke-width=".8"/><path d="M13.5,16 L24,16 L24,12.6 L31.4,18.5 L24,24.4 L24,21 L13.5,21Z" fill="url(#ga)" stroke="#1a5cc0" stroke-width=".8"/></svg>
<svg class="a" style="left:15px;top:330px" width="33" height="28" viewBox="0 0 33 28"><defs><linearGradient id="gpg" x1="0" y1="0" x2="0" y2="1"><stop offset="0" stop-color="#d5d8de"/><stop offset="1" stop-color="#fbfbfc"/></linearGradient></defs><path d="M1.5,1.5 L21,1.5 L28.5,9 L28.5,22.5 L1.5,22.5Z" fill="url(#gpg)" stroke="#4a4a4a" stroke-width="1.2"/><path d="M21,1.5 L21,9 L28.5,9Z" fill="#fff" stroke="#4a4a4a" stroke-width=".9"/><path d="M17.5,22 L28.5,10.5 L32,13.5 L21,25 L16.5,26.5Z" fill="#f6c13a" stroke="#8a5a10" stroke-width=".9"/><path d="M28.5,10.5 L32,13.5 L30.5,15.2 L27,12.2Z" fill="#c86a30"/><path d="M17.5,22 L21,25 L16.5,26.5Z" fill="#f4e6c8"/><path d="M19,22.5 L29,12" stroke="#ffe590" stroke-width="1"/></svg>
<svg class="a" style="left:18px;top:371px" width="23" height="32" viewBox="0 0 23 32"><rect x="1.5" y="1.5" width="20" height="29" rx="1" fill="#fdfdfd" stroke="#4a4a4a" stroke-width="1.1"/><rect x="4.5" y="4.5" width="10" height="10.5" fill="#3f6fb4" stroke="#2a4f8e" stroke-width=".8"/><rect x="5.5" y="5.5" width="8" height="4" fill="#6b97d4"/><rect x="16" y="4.5" width="3" height="10.5" fill="#b4b8be"/><path d="M5,20 H18.5 M5,25.5 H18.5" stroke="#333" stroke-width="1"/><path d="M9.5,18 V22 M15,23.5 V27.5" stroke="#333" stroke-width="1.6"/></svg>
<svg class="a" style="left:15px;top:420px" width="32" height="34" viewBox="0 0 32 34"><defs><linearGradient id="gv" x1="0" y1="0" x2="1" y2="0"><stop offset="0" stop-color="#123a6e"/><stop offset=".5" stop-color="#2d6db4"/><stop offset="1" stop-color="#0e2c58"/></linearGradient></defs><rect x="1.5" y="9.5" width="29" height="22.5" fill="#fcfcfc" stroke="#9a9a9a" stroke-width="1"/><rect x="1.5" y="22" width="29" height="10" fill="#e6e6e6" opacity=".6"/><path d="M2,3 L9,1.5 L15.5,17 L17,2 L21.5,1.5 L19,25.5 L13.5,25.5Z" fill="url(#gv)"/><path d="M15.5,17 L17,2 L21.5,1.5 L19,25.5Z" fill="#0e2c58"/><path d="M9,1.5 L15.5,17 L14.5,22 L6,3Z" fill="#3f86cc"/></svg>
<svg class="a" style="left:15px;top:475px" width="32" height="31" viewBox="0 0 32 31"><defs><linearGradient id="gpr" x1="0" y1="0" x2="0" y2="1"><stop offset="0" stop-color="#f4f5f7"/><stop offset=".55" stop-color="#d0d4da"/><stop offset=".6" stop-color="#6a707a"/><stop offset="1" stop-color="#5a606a"/></linearGradient></defs><path d="M7.5,9 L7.5,2 L24.5,2 L24.5,9" fill="#fff" stroke="#4a4a4a" stroke-width="1.1"/><path d="M9.5,4.5 L22.5,4.5 L20,9.5 L12,9.5Z" fill="#e2e4e8" stroke="#6a6a6a" stroke-width=".8"/><rect x="1.5" y="9" width="29" height="15.5" rx="2.5" fill="url(#gpr)" stroke="#3c3f45" stroke-width="1.1"/><path d="M4.5,17.2 H8" stroke="#8a8f98" stroke-width="1"/><rect x="7.5" y="22" width="17" height="7.5" fill="#c9d0d8" stroke="#3c3f45" stroke-width="1.1"/></svg>
<svg class="a" style="left:15px;top:523px" width="32" height="30" viewBox="0 0 32 30"><defs><linearGradient id="gpg" x1="0" y1="0" x2="0" y2="1"><stop offset="0" stop-color="#d5d8de"/><stop offset="1" stop-color="#fbfbfc"/></linearGradient></defs><path d="M1.5,1.5 L23,1.5 L30.5,9 L30.5,24.5 L1.5,24.5Z" fill="url(#gpg)" stroke="#4a4a4a" stroke-width="1.2"/><path d="M23,1.5 L23,9 L30.5,9Z" fill="#fff" stroke="#4a4a4a" stroke-width=".9"/><rect x="18.5" y="15.5" width="12.5" height="12.5" rx="1.5" fill="#e03a34" stroke="#9a1a14" stroke-width="1"/><path d="M21.5,18.5 L28,25 M28,18.5 L21.5,25" stroke="#fff" stroke-width="1.6"/></svg>
<div class="a" style="left:0px;top:0px;width:41px;height:41px;background:linear-gradient(150deg,#c9c9c9 0,#bdbdbd 40%,#a8a8a8 100%);border:1px solid #2c2c2c"></div>
<svg class="a" style="left:1px;top:1px" width="39" height="39" viewBox="0 0 39 39"><defs><linearGradient id="gi" x1="0" y1="0" x2="1" y2="0"><stop offset="0" stop-color="#fbe08a"/><stop offset=".45" stop-color="#f2b82c"/><stop offset="1" stop-color="#c48a10"/></linearGradient><radialGradient id="gab" cx="1" cy="1" r="1"><stop offset="0" stop-color="#8a8a8a"/><stop offset=".7" stop-color="#8e8e8e"/><stop offset="1" stop-color="#9c9c9c"/></radialGradient></defs><path d="M0,30 C3,16 16,7 39.5,6.5 L39.5,39 L0,39Z" fill="url(#gab)"/><path d="M3,3.5 L15,2.2 L15.5,5 L12,5.6 L16.5,22.6 L20.3,22.2 L20.8,26 L9.4,27.8 L8.8,24.6 L12,24 L7.5,6.6 L3.6,7Z" fill="url(#gi)" stroke="#b07c12" stroke-width=".5"/><path d="M12,24 L10,16 L8.2,22 Z" fill="#6a4a08" opacity=".55"/><path d="M28.8,17.5 L36.4,17.5 L32.6,22.3Z" fill="#333"/><path d="M28.6,18.6 L32.6,23.4 L36.6,18.6" fill="none" stroke="#e8e8e8" stroke-width=".6" opacity=".5"/><text x="20.3" y="36.9" font-family="Liberation Sans,sans-serif" font-weight="bold" font-size="7.6" fill="#1e1e1e" textLength="16.5">PRO</text></svg>
<svg class="a" style="left:49px;top:5px" width="17" height="14" viewBox="0 0 17 14"><path d="M1,1 L11,1 L15.5,5 L15.5,13 L1,13Z" fill="#f4f5f7" stroke="#2e2e2e" stroke-width="1"/><path d="M11,1 L11,5 L15.5,5" fill="#fff" stroke="#2e2e2e" stroke-width=".8"/></svg>
<svg class="a" style="left:70px;top:10.5px" width="6" height="4" viewBox="0 0 6 4"><path d="M0.3,0.3 L5.7,0.3 L3,3.6Z" fill="#262626"/></svg>
<svg class="a" style="left:81px;top:5px" width="17" height="13" viewBox="0 0 17 13"><path d="M1,11.5 L1,2 L5.5,1.2 L7,2.5 L12.5,2.5 L12.5,5.5" fill="#f0f1f3" stroke="#2e2e2e" stroke-width="1"/><path d="M1,11.8 L4.8,5.5 L16,5.5 L12,11.8Z" fill="#c4c8ce" stroke="#2e2e2e" stroke-width="1"/><path d="M2.5,10.5 L5.5,7 L14,7" fill="none" stroke="#f4f4f4" stroke-width=".9"/></svg>
<svg class="a" style="left:104px;top:4px" width="17" height="16" viewBox="0 0 17 16"><path d="M1,1 L16,1 L16,15 L3,15 L1,13Z" fill="#5a6276" stroke="#2a3044" stroke-width="1"/><rect x="3.5" y="1.5" width="10" height="6" fill="#eef0f4"/><rect x="4" y="10" width="9" height="5" fill="#eef0f4"/><rect x="5.2" y="11" width="2" height="3.2" fill="#222c44"/></svg>
<svg class="a" style="left:127px;top:5px" width="16" height="13" viewBox="0 0 16 13"><path d="M0.6,5.5 L7,0.6 L7,3.2 C12.5,3.2 15.4,5.5 15.4,12.2 L11,12.2 C11,9 10,7.8 7,7.8 L7,10.4Z" fill="#fbfbfb" stroke="#262626" stroke-width=".9"/></svg>
<svg class="a" style="left:151px;top:5px" width="16" height="13" viewBox="0 0 16 13"><path d="M15.4,5.5 L9,0.6 L9,3.2 C3.5,3.2 0.6,5.5 0.6,12.2 L5,12.2 C5,9 6,7.8 9,7.8 L9,10.4Z" fill="#8e8e8e" stroke="#707070" stroke-width=".6"/></svg>
<svg class="a" style="left:173px;top:6px" width="17" height="12" viewBox="0 0 17 12"><circle cx="11" cy="6" r="4.6" fill="#7f8ea2"/><path d="M0.5,6 L5,2.5 L5,4.8 L8,4.8 L8,7.2 L5,7.2 L5,9.5Z" fill="#7c8088"/></svg>
<svg class="a" style="left:194px;top:10.5px" width="6" height="4" viewBox="0 0 6 4"><path d="M0.3,0.3 L5.7,0.3 L3,3.6Z" fill="#474747"/></svg>
<svg class="a" style="left:205px;top:4px" width="16" height="16" viewBox="0 0 16 16"><path d="M1,14 L3,5 L8,1.5 L13,5 L15,14Z" fill="#8f8878" stroke="#70695c" stroke-width=".8"/><path d="M4,6 L12,6 L9,10 L13,10 L6,15 L8,11 L4,11Z" fill="#c9a04e" opacity=".85"/></svg>
<svg class="a" style="left:226px;top:10.5px" width="6" height="4" viewBox="0 0 6 4"><path d="M0.3,0.3 L5.7,0.3 L3,3.6Z" fill="#474747"/></svg>
<svg class="a" style="left:237px;top:2.5px" width="20" height="19" viewBox="0 0 20 19"><path d="M1.5,5 L5,2 L14,2 L14,13 L10.5,16 L1.5,16Z" fill="#3f9a42" stroke="#1c5a20" stroke-width="1"/><path d="M1.5,5 L10.5,5 L10.5,16 M10.5,5 L14,2" fill="none" stroke="#1c5a20" stroke-width=".9"/><path d="M3,6.5 L9,6.5 L9,14.5 L3,14.5Z" fill="#dfe6df"/><path d="M1.5,5 L5,2 L14,2 L10.5,5Z" fill="#8ed08e"/><path d="M10.5,5.5 L10.5,16.5 L13,14 L14.8,18 L16.4,17.2 L14.6,13.4 L18,13Z" fill="#fff" stroke="#111" stroke-width=".8"/></svg>
<svg class="a" style="left:258.6px;top:10.5px" width="6" height="4" viewBox="0 0 6 4"><path d="M0.3,0.3 L5.7,0.3 L3,3.6Z" fill="#474747"/></svg>
<div class="a" style="left:269px;top:2px;width:99px;height:20px;background:linear-gradient(#fdfdfd,#ececec 55%,#dcdcdc);border:1px solid #8a8a8a;border-radius:1px"></div>
<div class="t" style="left:289.0px;top:6px;font-size:12.50px;color:#111;letter-spacing:-0.446px;">Dle materi</div>
<div class="t" style="left:342.0px;top:6px;font-size:12.50px;color:#111;width:4.2px;overflow:hidden;">á</div>
<svg class="a" style="left:357px;top:10px" width="8" height="5" viewBox="0 0 8 5"><path d="M0.3,0.3 L7.7,0.3 L4,4.7Z" fill="#333"/></svg>
<svg class="a" style="left:370px;top:4px" width="17" height="16" viewBox="0 0 17 16"><path d="M8.2,0.8 V15.2 M0.6,8 H15.8" stroke="#a8746e" stroke-width="3.2"/><path d="M8.2,1.4 V14.6 M1.2,8 H15.2" stroke="#bd8a84" stroke-width="1.6"/></svg>
<svg class="a" style="left:391px;top:7px" width="11" height="9" viewBox="0 0 11 9"><path d="M1,1 H10" stroke="#111" stroke-width="1.6"/><path d="M1,3.6 L10,3.6 L5.5,8.4Z" fill="#111"/></svg>
<svg class="a" style="left:1026px;top:4px" width="17" height="16" viewBox="0 0 17 16"><path d="M2,15 L2,7 L3.5,3 L6.5,3 L7.5,7 L7.5,15Z M15,15 L15,7 L13.5,3 L10.5,3 L9.5,7 L9.5,15Z" fill="#f2f2f2" stroke="#222" stroke-width=".9"/><rect x="7" y="5" width="3" height="4" fill="#f2f2f2" stroke="#222" stroke-width=".6"/><rect x="3.4" y="1" width="3" height="2.4" fill="#f2f2f2" stroke="#222" stroke-width=".6"/><rect x="10.6" y="1" width="3" height="2.4" fill="#f2f2f2" stroke="#222" stroke-width=".6"/></svg>
<svg class="a" style="left:1047px;top:10.5px" width="6" height="4" viewBox="0 0 6 4"><path d="M0.3,0.3 L5.7,0.3 L3,3.6Z" fill="#8a8a8a"/></svg>
<svg class="a" style="left:1058px;top:3px" width="18" height="17" viewBox="0 0 18 17"><path d="M7.5,6.2 L16,13.6 L15.8,16 L13.4,16 L13.2,14.4 L11.8,14.4 L11.6,13 L10.2,12.8 L6,8.6Z" fill="#f2f2f2" stroke="#222" stroke-width=".8"/><circle cx="5.2" cy="5.2" r="4.4" fill="#f2f2f2" stroke="#222" stroke-width=".9"/><circle cx="3.8" cy="3.8" r="1.4" fill="#4a4a4a"/></svg>
<svg class="a" style="left:1083px;top:4px" width="15" height="16" viewBox="0 0 15 16"><path d="M4.6,12.4 L2.6,15.6 L11.4,15.6 L9,12.4Z" fill="#f2f2f2" stroke="#222" stroke-width=".8"/><path d="M1.9,3.6 A6.2,6.2 0 0 0 11,12.6 Z" fill="#f2f2f2" stroke="#222" stroke-width=".8"/><path d="M6.4,8.2 L11.8,2.6" stroke="#222" stroke-width="1.3"/><path d="M6.4,8.2 L11.4,3" stroke="#f2f2f2" stroke-width=".5"/><circle cx="12" cy="2.4" r="1.1" fill="#222"/></svg>
<svg class="a" style="left:1104px;top:3px" width="18" height="17" viewBox="0 0 18 17"><path d="M9,1 L11.4,6.3 L17.2,6.9 L12.8,10.8 L14.1,16.4 L9,13.5 L3.9,16.4 L5.2,10.8 L0.8,6.9 L6.6,6.3Z" fill="#f2f2f2" stroke="#222" stroke-width=".9"/></svg>
<svg class="a" style="left:1127px;top:3px" width="18" height="18" viewBox="0 0 18 18"><circle cx="9" cy="9" r="7.6" fill="#f2f2f2" stroke="#222" stroke-width="1"/><text x="9" y="13.3" text-anchor="middle" font-family="Liberation Sans,sans-serif" font-weight="bold" font-size="12" fill="#222">?</text></svg>
<svg class="a" style="left:1148.5px;top:10.5px" width="6" height="4" viewBox="0 0 6 4"><path d="M0.3,0.3 L5.7,0.3 L3,3.6Z" fill="#8a8a8a"/></svg>
<div class="a" style="left:0px;top:993.5px;width:1280px;height:30.5px;background:linear-gradient(90deg,#46463f 0,#3c3c39 4%,#2e2e2d 17%,#302d2a 30%,#3a332d 40%,#3e3731 50%,#4e4a44 57%,#47423c 64%,#48453f 75%,#4e4d47 85%,#504f4a 100%)"></div>
<div class="a" style="left:0px;top:993.5px;width:1280px;height:30.5px;background:linear-gradient(rgba(255,255,255,.28) 0,rgba(255,255,255,.10) 5%,rgba(255,255,255,.04) 45%,rgba(0,0,0,.12) 55%,rgba(0,0,0,.22) 100%)"></div>
<div class="a" style="left:0px;top:993.6px;width:1280px;height:1px;background:#3c3c3a"></div>
<div class="a" style="left:0px;top:994.6px;width:1280px;height:1px;background:#85857c"></div>
<svg class="a" style="left:6px;top:988px" width="42" height="36" viewBox="0 0 42 36"><defs><radialGradient id="go1" cx=".5" cy="1.02" r=".62"><stop offset="0" stop-color="#18dcf8"/><stop offset=".35" stop-color="#0c86d0"/><stop offset="1" stop-color="#0a4c94"/></radialGradient><linearGradient id="go2" x1="0" y1="0" x2="0" y2="1"><stop offset="0" stop-color="#c4d4e0"/><stop offset="1" stop-color="#6c94b8"/></linearGradient><clipPath id="co"><circle cx="21.1" cy="21" r="18.4"/></clipPath></defs><circle cx="21.1" cy="21" r="19.2" fill="#1c3c5c" opacity=".55"/><circle cx="21.1" cy="21" r="18.4" fill="url(#go1)"/><g clip-path="url(#co)"><path d="M0,0 H42 V20 C34,17 28,21 21,21.5 C13,22 8,18 0,21Z" fill="url(#go2)" opacity=".92"/></g><circle cx="21.1" cy="21" r="18.4" fill="none" stroke="#a8c8e4" stroke-width="1" opacity=".85"/><path d="M13.2,9.2 C16,7.6 19,7.6 22,9 L20.6,17.2 C18,16 15,16 12.2,17.4Z" fill="#f0602c"/><path d="M14.5,9.6 C16.5,8.6 18.5,8.6 20.6,9.6 L20,13 C18,12 16,12 14,13Z" fill="#f89858" opacity=".8"/><path d="M23.2,10.6 C26,12 29.5,11.8 32.8,10.4 L31.2,19.4 C28.4,21 25,21 22,19.6Z" fill="#84c03c"/><path d="M24.2,12 C26.5,13 29,12.8 31.4,12 L31,15 C28.6,16 26,16 23.8,15Z" fill="#c0e080" opacity=".75"/><path d="M11.6,19 C14.4,17.6 17.4,17.6 20.2,19 L18.6,27.6 C16,26.4 13,26.4 10,27.8Z" fill="#2c90e0"/><path d="M13,20.4 C15,19.6 17,19.6 19,20.4 L18.4,23.4 C16.5,22.6 14.5,22.6 12.4,23.6Z" fill="#8cd0f8" opacity=".8"/><path d="M21.6,20.8 C24.4,22 27.8,22 30.8,20.6 L29.2,29.4 C26.4,30.8 23,30.8 20,29.6Z" fill="#fcc028"/><path d="M22.8,22.4 C25,23.2 27.4,23.2 29.6,22.4 L29.2,25 C27,25.8 24.6,25.8 22.4,25Z" fill="#fce888" opacity=".7"/></svg>
<div class="a" style="left:60px;top:995px;width:158px;height:28px;border:1px solid #1e1e1e;border-radius:3px;background:linear-gradient(#686866 0,#555553 48%,#424240 52%,#464644 100%);box-shadow:inset 0 0 0 1px rgba(255,255,255,.25)"></div>
<svg class="a" style="left:68px;top:1000px" width="18" height="18" viewBox="0 0 18 18"><circle cx="9" cy="9.5" r="6.2" fill="#3a9ae8" stroke="#1a5cb0" stroke-width="1"/><path d="M4.5,9.5 H13.5" stroke="#fff" stroke-width="1.8"/><path d="M5,7 C7,4.5 11,4.5 13,7.5" fill="none" stroke="#fff" stroke-width="1.5"/><path d="M5,12 C7,14.5 11,14.5 13.2,11.5" fill="none" stroke="#fff" stroke-width="1.5"/><path d="M1,14 C1,8 9,2 16.5,2.5 C14,3 11,4.5 8,7 C4,10.5 2.5,14 4.5,16.5 C2.5,17 1,16 1,14Z" fill="#f4c430" stroke="#b88a10" stroke-width=".5"/></svg>
<div class="t" style="left:89.0px;top:1003px;font-size:12.00px;color:#fff;letter-spacing:-0.092px;">CNC Zobrazit téma -...</div>
<svg class="a" style="left:234px;top:1001px" width="18" height="18" viewBox="0 0 18 18"><path d="M1,15 L1,3 L6.5,3 L8,5 L16.5,5 L16.5,15Z" fill="#f0d27a" stroke="#b8962e" stroke-width=".8"/><path d="M1,15 L1,7 L16.5,7 L16.5,15Z" fill="#f8e49c"/><rect x="4" y="9" width="10" height="7.5" rx="1" fill="#8cc4ee" stroke="#4a8ac8" stroke-width=".8"/><rect x="6" y="13" width="6" height="3.5" fill="#e8f2fa"/></svg>
<svg class="a" style="left:281px;top:1001px" width="17" height="17" viewBox="0 0 17 17"><rect x="0.5" y="0.5" width="16" height="16" rx="1" fill="#a8cdf0" stroke="#5a8cc4" stroke-width="1"/><rect x="2.5" y="2.5" width="12" height="12" fill="#dcecfa"/><circle cx="8.5" cy="8.5" r="5.6" fill="#f08a1c" stroke="#c46408" stroke-width=".6"/><path d="M6.8,5.5 L11.5,8.5 L6.8,11.5Z" fill="#fff"/></svg>
<svg class="a" style="left:326px;top:1000px" width="18" height="17" viewBox="0 0 18 17"><circle cx="6" cy="4.5" r="3" fill="#4ab4f0"/><path d="M1,13 C1,8 11,8 11,13Z" fill="#3a9ce0"/><circle cx="12.5" cy="5.5" r="2.8" fill="#5cc45c"/><path d="M8,14 C8,9.5 17,9.5 17,14Z" fill="#4ab04a"/><path d="M0.5,13.5 C5,11 12,16 17.5,13.5 L17.5,15.5 C12,18 5,13.5 0.5,15.5Z" fill="#f4c430"/></svg>
<svg class="a" style="left:372px;top:1001px" width="17" height="17" viewBox="0 0 17 17"><rect x="0.5" y="0.5" width="16" height="16" fill="#0e1422" stroke="#dcdcdc" stroke-width="1"/><circle cx="7" cy="6.5" r="3.6" fill="#e8b890"/><path d="M2,16 C2,10 12,10 12,16Z" fill="#d8d4c8"/><path d="M15,3 L8,13 L7,15.5 L9.5,14 L16,4.5Z" fill="#f4c430" stroke="#8a6a10" stroke-width=".5"/><rect x="11" y="2" width="5" height="4" fill="#3a7ad8"/></svg>
<svg class="a" style="left:418px;top:1000px" width="18" height="18" viewBox="0 0 18 18"><rect x="0.5" y="0.5" width="17" height="17" rx="1.5" fill="#c41a1a" stroke="#7e0c0c" stroke-width="1"/><rect x="1.5" y="1.5" width="15" height="7" fill="#e04a4a" opacity=".6"/><text x="9" y="14" text-anchor="middle" font-family="Liberation Sans,sans-serif" font-weight="bold" font-style="italic" font-size="12.5" fill="#fff" textLength="13">Fz</text></svg>
<svg class="a" style="left:465px;top:1001px" width="16" height="16" viewBox="0 0 16 16"><circle cx="8" cy="8" r="4.6" fill="#f8f03a" stroke="#c8b410" stroke-width=".8"/><path d="M8,0.5 V3 M8,13 V15.5 M0.5,8 H3 M13,8 H15.5 M2.6,2.6 L4.4,4.4 M11.6,11.6 L13.4,13.4 M2.6,13.4 L4.4,11.6 M11.6,4.4 L13.4,2.6" stroke="#f8f03a" stroke-width="1.4"/><circle cx="6.4" cy="7.2" r=".9" fill="#333"/><circle cx="9.6" cy="7.2" r=".9" fill="#333"/><path d="M5.8,9.6 C7,10.8 9,10.8 10.2,9.6" fill="none" stroke="#333" stroke-width=".8"/></svg>
<div class="a" style="left:498px;top:995px;width:158px;height:28px;border:1px solid #2a2a2a;border-radius:3px;background:linear-gradient(#b6b4b0 0,#9a9894 45%,#84827e 52%,#8e8c88 100%);box-shadow:inset 0 0 0 1px rgba(255,255,255,.45)"></div>
<svg class="a" style="left:506px;top:1001px" width="17" height="16" viewBox="0 0 17 16"><rect x="1" y="3" width="15" height="12" fill="#f6f6f6" stroke="#8a8a8a" stroke-width=".8"/><path d="M2.5,1 L8,0.5 L8,2 L6.4,2.2 L7.6,8 L9.5,8 L9.5,9.8 L3.5,10.2 L3.5,8.5 L5.2,8.3 L4,2.5 L2.5,2.6Z" fill="#e8a828" stroke="#a06c0c" stroke-width=".6"/></svg>
<div class="t" style="left:527.0px;top:1003px;font-size:12.00px;color:#fff;letter-spacing:-0.070px;text-shadow:0 0 2px rgba(0,0,0,.6);">Autodesk Inventor Pr...</div>
<div class="t" style="left:1102.6px;top:1001px;font-size:12.00px;color:#ececec;letter-spacing:-1.335px;">CS</div>
<svg class="a" style="left:1133px;top:1006.5px" width="9" height="6" viewBox="0 0 9 6"><path d="M0.3,5.7 L8.7,5.7 L4.5,0.5Z" fill="#f4f4f4"/></svg>
<svg class="a" style="left:1154px;top:1001px" width="17" height="17" viewBox="0 0 17 17"><rect x="5.5" y="3.5" width="10" height="8.5" fill="#3c4a5c" stroke="#f0f0f0" stroke-width="1.2"/><path d="M7,15.5 H14 M10.5,12 V15.5" stroke="#f0f0f0" stroke-width="1.3"/><path d="M2.5,1 V4 M4.8,1 V4" stroke="#f0f0f0" stroke-width="1"/><rect x="1.5" y="3.5" width="4.4" height="4" fill="#f0f0f0"/><path d="M3.7,7.5 V15 H7" fill="none" stroke="#f0f0f0" stroke-width="1.1"/></svg>
<svg class="a" style="left:1178px;top:1002px" width="17" height="16" viewBox="0 0 17 16"><path d="M1,5.5 L4,5.5 L8,1.5 L8,14.5 L4,10.5 L1,10.5Z" fill="#f4f4f4" stroke="#bdbdbd" stroke-width=".6"/><path d="M10,5.5 C11.2,7 11.2,9 10,10.5 M12,3.5 C14.2,6 14.2,10 12,12.5 M14,2 C17,5.5 17,10.5 14,14" fill="none" stroke="#f0f0f0" stroke-width="1.1"/></svg>
<div class="t" style="left:1219.8px;top:1004px;font-size:12.00px;color:#f4f4f4;letter-spacing:-0.646px;">22:18</div>
<div class="a" style="left:1266px;top:995px;width:14px;height:28px;border:1px solid #2a2a2a;border-right:none;background:linear-gradient(#8c8b87,#6e6d69 50%,#5e5d59);box-shadow:inset 1px 1px 0 rgba(255,255,255,.3)"></div>
</body></html>
